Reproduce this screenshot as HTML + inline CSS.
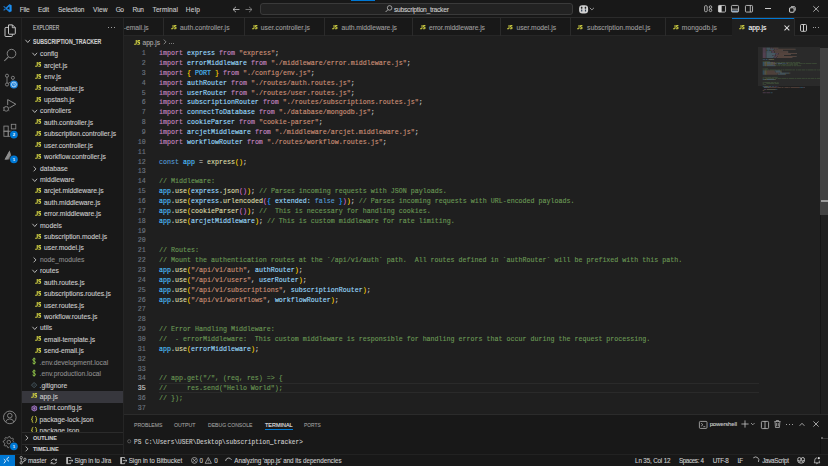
<!DOCTYPE html><html><head><meta charset="utf-8"><style>
*{margin:0;padding:0;box-sizing:border-box}
html,body{width:828px;height:466px;overflow:hidden;background:#1f1f1f}
body{position:relative;font-family:"Liberation Sans",sans-serif;color:#cccccc}
.a{position:absolute;white-space:pre}
.t{position:absolute;white-space:pre;line-height:10px;height:10px;-webkit-text-stroke:0.1px currentColor}
.mono{font-family:"Liberation Mono",monospace;-webkit-text-stroke:0.12px currentColor}
svg{position:absolute;overflow:visible}
</style></head><body><div class="a" style="left:0px;top:0px;width:828px;height:17px;background:#181818;"></div>
<div class="a" style="left:0px;top:17px;width:828px;height:1px;background:#2b2b2b;"></div>
<div class="a" style="left:0px;top:18px;width:22px;height:437px;background:#181818;"></div>
<div class="a" style="left:22px;top:18px;width:101px;height:437px;background:#181818;"></div>
<div class="a" style="left:123px;top:18px;width:705px;height:18px;background:#181818;"></div>
<div class="a" style="left:123px;top:35px;width:705px;height:1px;background:#262626;"></div>
<div class="a" style="left:123px;top:36px;width:705px;height:378px;background:#1f1f1f;"></div>
<div class="a" style="left:123px;top:415px;width:705px;height:40px;background:#181818;"></div>
<div class="a" style="left:123px;top:414.4px;width:705px;height:1px;background:#2b2b2b;"></div>
<div class="a" style="left:820.4px;top:47.5px;width:0.7px;height:366.5px;background:#151515;"></div>
<div class="a" style="left:0px;top:455px;width:828px;height:11px;background:#181818;"></div>
<div class="a" style="left:0px;top:454.2px;width:828px;height:0.9px;background:#222222;"></div>
<div class="a" style="left:0px;top:455px;width:15px;height:11px;background:#0078d4;"></div>
<div class="t" style="left:19.7px;top:4.70px;font-size:6.6px;color:#cccccc;line-height:10px;height:10px;;letter-spacing:-0.209px">File</div>
<div class="t" style="left:38.0px;top:4.70px;font-size:6.6px;color:#cccccc;line-height:10px;height:10px;;letter-spacing:-0.128px">Edit</div>
<div class="t" style="left:58.0px;top:4.70px;font-size:6.6px;color:#cccccc;line-height:10px;height:10px;;letter-spacing:-0.082px">Selection</div>
<div class="t" style="left:93.0px;top:4.70px;font-size:6.6px;color:#cccccc;line-height:10px;height:10px;;letter-spacing:0.103px">View</div>
<div class="t" style="left:115.75px;top:4.70px;font-size:6.6px;color:#cccccc;line-height:10px;height:10px;;letter-spacing:-0.561px">Go</div>
<div class="t" style="left:132.5px;top:4.70px;font-size:6.6px;color:#cccccc;line-height:10px;height:10px;;letter-spacing:-0.305px">Run</div>
<div class="t" style="left:152.5px;top:4.70px;font-size:6.6px;color:#cccccc;line-height:10px;height:10px;;letter-spacing:0.079px">Terminal</div>
<div class="t" style="left:185.75px;top:4.70px;font-size:6.6px;color:#cccccc;line-height:10px;height:10px;;letter-spacing:0.229px">Help</div>
<svg style="left:2.5px;top:4.3px;" width="10" height="9" viewBox="0 0 10 9"><g transform="scale(0.9,0.95)"><path d="M7.2 0.3 L9.6 1.4 V7.6 L7.2 8.7 L2.6 4.5 Z M7.2 2.6 L4.4 4.5 L7.2 6.4 Z" fill="#1c8ff0" fill-rule="evenodd"/><path d="M0.2 2.6 L1.2 2 L7.3 7.1 L7.2 8.7 Z M0.2 6.4 L1.2 7 L7.3 1.9 L7.2 0.3 Z" fill="#1a78d0"/></g></svg>
<svg style="left:231.5px;top:5.5px;" width="8" height="7" viewBox="0 0 8 7"><path d="M1 3.5 H7.5 M1 3.5 L4 0.8 M1 3.5 L4 6.2" stroke="#cccccc" stroke-width="0.8" fill="none"/></svg>
<svg style="left:244.5px;top:5.5px;" width="8" height="7" viewBox="0 0 8 7"><path d="M7 3.5 H0.5 M7 3.5 L4 0.8 M7 3.5 L4 6.2" stroke="#8a8a8a" stroke-width="0.8" fill="none"/></svg>
<div class="a" style="left:260px;top:3px;width:313px;height:12px;background:#222222;border:0.7px solid #3a3a3a;border-radius:3px"></div>
<div class="a" style="left:350.75px;top:0px;width:24.25px;height:1px;background:#0078d4;"></div>
<svg style="left:384.5px;top:5.3px;" width="8" height="8" viewBox="0 0 8 8"><circle cx="4.6" cy="2.9" r="2.3" stroke="#cccccc" stroke-width="0.7" fill="none"/><path d="M3 4.6 L0.6 7" stroke="#cccccc" stroke-width="0.8"/></svg>
<div class="t" style="left:394.0px;top:4.60px;font-size:6.7px;color:#cccccc;line-height:10px;height:10px;;letter-spacing:-0.261px">subscription_tracker</div>
<svg style="left:578.6px;top:4.6px;" width="16" height="9" viewBox="0 0 16 9"><rect x="0.1" y="0.2" width="9" height="8.2" rx="3.2" fill="#d0d0d0"/><rect x="1.9" y="1.7" width="1.5" height="2.0" rx="0.4" fill="#202020"/><rect x="5.7" y="1.7" width="1.5" height="2.0" rx="0.4" fill="#202020"/><rect x="2.1" y="4.4" width="1.2" height="2.2" rx="0.4" fill="#2a3b50"/><rect x="5.9" y="4.4" width="1.2" height="2.2" rx="0.4" fill="#2a3b50"/><path d="M10.8 2.8 L12.9 4.9 L15 2.8" stroke="#bdbdbd" stroke-width="0.75" fill="none"/></svg>
<svg style="left:704px;top:5px;" width="9" height="8" viewBox="0 0 9 8"><rect x="0.6" y="0.7" width="2.6" height="6" rx="0.9" stroke="#cccccc" stroke-width="0.8" fill="none"/><circle cx="6.5" cy="2.1" r="1.3" stroke="#cccccc" stroke-width="0.8" fill="none"/><circle cx="6.5" cy="5.3" r="1.3" stroke="#cccccc" stroke-width="0.8" fill="none"/></svg>
<svg style="left:717.8px;top:5px;" width="9" height="8" viewBox="0 0 9 8"><rect x="0.45" y="0.45" width="7.1" height="6.6" rx="1" stroke="#cccccc" stroke-width="0.85" fill="none"/><rect x="0.45" y="0.45" width="3.2" height="6.6" fill="#d8d8d8"/></svg>
<svg style="left:731.2px;top:5px;" width="9" height="8" viewBox="0 0 9 8"><rect x="0.45" y="0.45" width="7.1" height="6.6" rx="1" stroke="#cccccc" stroke-width="0.85" fill="none"/><rect x="0.45" y="3.7" width="7.1" height="0.8" fill="#cccccc"/><rect x="0.8" y="5.6" width="6.4" height="1.2" fill="#a9c4de"/></svg>
<svg style="left:744.6px;top:5px;" width="9" height="8" viewBox="0 0 9 8"><rect x="0.45" y="0.45" width="7.1" height="6.6" rx="1" stroke="#cccccc" stroke-width="0.85" fill="none"/><path d="M5.3 0.45 V7.05" stroke="#cccccc" stroke-width="0.85"/></svg>
<div class="a" style="left:765.3px;top:7.8px;width:5.8px;height:0.75px;background:#cccccc;"></div>
<svg style="left:788.6px;top:5.9px;" width="8" height="7" viewBox="0 0 8 7"><rect x="0.55" y="1.75" width="4.6" height="4.4" rx="1.1" stroke="#cccccc" stroke-width="1.05" fill="none"/><path d="M2.0 0.6 H5.0 Q6.3 0.6 6.3 1.9 V4.6" stroke="#cccccc" stroke-width="0.85" fill="none"/></svg>
<svg style="left:813px;top:6.1px;" width="7" height="6" viewBox="0 0 7 6"><path d="M0.3 0.2 L5.9 5.6 M5.9 0.2 L0.3 5.6" stroke="#cccccc" stroke-width="0.8"/></svg>
<svg style="left:0;top:0" width="22" height="466" viewBox="0 0 22 466"><path d="M8.5 24.9 H12.5 L15.3 27.7 V33.4 Q15.3 34.2 14.5 34.2 H9.3 Q8.5 34.2 8.5 33.4 Z" stroke="#d7d7d7" stroke-width="0.9" fill="none"/><path d="M8.5 27.4 H6 Q5 27.4 5 28.4 V35.9 Q5 36.5 5.7 36.5 H11.5 Q12.3 36.5 12.3 35.7 V34.2" stroke="#d7d7d7" stroke-width="0.9" fill="none"/><path d="M12.3 24.9 V27.7 H15.3" stroke="#d7d7d7" stroke-width="0.8" fill="none"/><circle cx="11.5" cy="53.6" r="4.3" stroke="#8b8b8b" stroke-width="0.95" fill="none"/><path d="M8.4 56.8 L4.3 61" stroke="#8b8b8b" stroke-width="1.05"/><circle cx="7" cy="75.7" r="1.55" stroke="#8b8b8b" stroke-width="0.85" fill="none"/><circle cx="7" cy="84.5" r="1.55" stroke="#8b8b8b" stroke-width="0.85" fill="none"/><circle cx="12.9" cy="77.8" r="1.55" stroke="#8b8b8b" stroke-width="0.85" fill="none"/><path d="M7 77.25 V82.95 M12.9 79.35 Q12.9 81.6 8.2 83.4" stroke="#8b8b8b" stroke-width="0.85" fill="none"/><circle cx="13.9" cy="84.5" r="4.5" fill="#181818"/><circle cx="13.9" cy="84.5" r="4.0" fill="#1b80d8"/><circle cx="13.9" cy="84.5" r="2.4" stroke="#fff" stroke-width="0.65" fill="none"/><path d="M13.9 83.2 V84.6 L14.9 85.2" stroke="#fff" stroke-width="0.55" fill="none"/><path d="M7.7 99.6 L15.8 104.2 L9.6 107.8" stroke="#8b8b8b" stroke-width="0.95" fill="none" stroke-linejoin="round"/><path d="M7.7 99.6 V105" stroke="#8b8b8b" stroke-width="0.95"/><circle cx="6.2" cy="108.9" r="2.3" fill="#181818" stroke="#8b8b8b" stroke-width="0.85"/><path d="M3 107.2 L4.1 107.8 M3 110.8 L4.1 110.2 M9.4 107.2 L8.3 107.8 M9.4 110.8 L8.3 110.2 M3.4 109 H4 M8.4 109 H9 M5 106.4 L5.6 107 M7.4 106.4 L6.8 107" stroke="#8b8b8b" stroke-width="0.65"/><rect x="3.9" y="126.1" width="4.3" height="5.1" stroke="#8b8b8b" stroke-width="0.85" fill="none"/><rect x="3.9" y="131.2" width="4.3" height="5.1" stroke="#8b8b8b" stroke-width="0.85" fill="none"/><rect x="8.2" y="131.2" width="3.5" height="5.1" stroke="#8b8b8b" stroke-width="0.85" fill="none"/><rect x="11.3" y="124.3" width="4.5" height="4.6" stroke="#8b8b8b" stroke-width="0.85" fill="none"/><circle cx="13.9" cy="134.6" r="4.5" fill="#181818"/><circle cx="13.9" cy="134.6" r="3.9" fill="#0078d4"/><text x="13.9" y="136.1" font-size="4.2" fill="#fff" text-anchor="middle" font-family="Liberation Sans" font-weight="bold">2</text><path d="M9.6 150.4 L12.6 159.4 H4.6 Z" fill="#747474"/><path d="M9.6 150.4 L10.6 155 L7.4 159.4 H4.6 Z" fill="#8e8e8e"/><circle cx="13.9" cy="159.3" r="4.5" fill="#181818"/><circle cx="13.9" cy="159.3" r="3.9" fill="#0078d4"/><text x="13.9" y="160.8" font-size="4.2" fill="#fff" text-anchor="middle" font-family="Liberation Sans" font-weight="bold">1</text><circle cx="9.8" cy="417.4" r="6.3" stroke="#8b8b8b" stroke-width="0.9" fill="none"/><circle cx="9.8" cy="415.6" r="2.3" stroke="#8b8b8b" stroke-width="0.9" fill="none"/><path d="M5.6 422 Q6.6 418.9 9.8 418.9 Q13 418.9 14 422" stroke="#8b8b8b" stroke-width="0.9" fill="none"/><polygon points="8.80,436.50 9.89,436.61 10.45,438.13 11.19,438.52 12.76,438.14 13.46,438.99 12.77,440.45 13.02,441.26 14.40,442.10 14.29,443.19 12.77,443.75 12.38,444.49 12.76,446.06 11.91,446.76 10.45,446.07 9.64,446.32 8.80,447.70 7.71,447.59 7.15,446.07 6.41,445.68 4.84,446.06 4.14,445.21 4.83,443.75 4.58,442.94 3.20,442.10 3.31,441.01 4.83,440.45 5.22,439.71 4.84,438.14 5.69,437.44 7.15,438.13 7.96,437.88" stroke="#8b8b8b" stroke-width="0.8" fill="none" stroke-linejoin="round"/><circle cx="8.8" cy="442.1" r="1.8" stroke="#8b8b8b" stroke-width="0.8" fill="none"/><circle cx="13.9" cy="446.3" r="4.5" fill="#181818"/><circle cx="13.9" cy="446.3" r="3.9" fill="#0078d4"/><text x="13.9" y="447.8" font-size="4.2" fill="#fff" text-anchor="middle" font-family="Liberation Sans" font-weight="bold">1</text></svg>
<div class="a" style="left:21px;top:17.5px;width:1px;height:437px;background:#232323;"></div>
<div class="t" style="left:32.6px;top:22.90px;font-size:6.3px;color:#cccccc;line-height:10px;height:10px;;transform:scaleX(0.7667);transform-origin:0.000px 50%">EXPLORER</div>
<div class="a" style="left:108.0px;top:26.9px;width:1.1px;height:1.1px;background:#cccccc;border-radius:50%"></div>
<div class="a" style="left:111.0px;top:26.9px;width:1.1px;height:1.1px;background:#cccccc;border-radius:50%"></div>
<div class="a" style="left:114.0px;top:26.9px;width:1.1px;height:1.1px;background:#cccccc;border-radius:50%"></div>
<div class="a" style="left:0;top:0;width:123px;height:432px;overflow:hidden">
<svg style="left:24.7px;top:39.410000000000004px;" width="6" height="5" viewBox="0 0 6 5"><path d="M0.4 0.8 L2.75 3.5 L5.1 0.8" stroke="#cccccc" stroke-width="0.85" fill="none"/></svg>
<div class="t" style="left:32.6px;top:37.01px;font-size:6.4px;color:#cccccc;line-height:10px;height:10px;;font-weight:bold;transform:scaleX(0.8221);transform-origin:0.000px 50%">SUBSCRIPTION_TRACKER</div>
<svg style="left:31.9px;top:52.13px;" width="6" height="5" viewBox="0 0 6 5"><path d="M0.4 0.8 L2.75 3.5 L5.1 0.8" stroke="#cccccc" stroke-width="0.85" fill="none"/></svg>
<div class="t" style="left:40px;top:49.33px;font-size:6.75px;color:#cccccc;line-height:10px;height:10px;">config</div>
<svg style="left:34.9px;top:62.25px;" width="7" height="5" viewBox="0 0 7 5"><g transform="scale(0.950,1.000)"><path d="M1.8 0 H3.0 V3.3 Q3.0 4.8 1.6 4.8 H0.1 V3.7 H1.3 Q1.8 3.7 1.8 3.2 Z" fill="#cbcb41"/><path d="M6.3 0.6 H4.7 Q3.9 0.6 3.9 1.45 Q3.9 2.35 4.8 2.35 H5.1 Q5.95 2.35 5.95 3.25 Q5.95 4.2 5.0 4.2 H3.5" stroke="#cbcb41" stroke-width="1.15" fill="none"/></g></svg>
<div class="t" style="left:44px;top:60.75px;font-size:6.75px;color:#cccccc;line-height:10px;height:10px;">arcjet.js</div>
<svg style="left:34.9px;top:73.67px;" width="7" height="5" viewBox="0 0 7 5"><g transform="scale(0.950,1.000)"><path d="M1.8 0 H3.0 V3.3 Q3.0 4.8 1.6 4.8 H0.1 V3.7 H1.3 Q1.8 3.7 1.8 3.2 Z" fill="#cbcb41"/><path d="M6.3 0.6 H4.7 Q3.9 0.6 3.9 1.45 Q3.9 2.35 4.8 2.35 H5.1 Q5.95 2.35 5.95 3.25 Q5.95 4.2 5.0 4.2 H3.5" stroke="#cbcb41" stroke-width="1.15" fill="none"/></g></svg>
<div class="t" style="left:44px;top:72.17px;font-size:6.75px;color:#cccccc;line-height:10px;height:10px;">env.js</div>
<svg style="left:34.9px;top:85.08999999999999px;" width="7" height="5" viewBox="0 0 7 5"><g transform="scale(0.950,1.000)"><path d="M1.8 0 H3.0 V3.3 Q3.0 4.8 1.6 4.8 H0.1 V3.7 H1.3 Q1.8 3.7 1.8 3.2 Z" fill="#cbcb41"/><path d="M6.3 0.6 H4.7 Q3.9 0.6 3.9 1.45 Q3.9 2.35 4.8 2.35 H5.1 Q5.95 2.35 5.95 3.25 Q5.95 4.2 5.0 4.2 H3.5" stroke="#cbcb41" stroke-width="1.15" fill="none"/></g></svg>
<div class="t" style="left:44px;top:83.59px;font-size:6.75px;color:#cccccc;line-height:10px;height:10px;">nodemailer.js</div>
<svg style="left:34.9px;top:96.51px;" width="7" height="5" viewBox="0 0 7 5"><g transform="scale(0.950,1.000)"><path d="M1.8 0 H3.0 V3.3 Q3.0 4.8 1.6 4.8 H0.1 V3.7 H1.3 Q1.8 3.7 1.8 3.2 Z" fill="#cbcb41"/><path d="M6.3 0.6 H4.7 Q3.9 0.6 3.9 1.45 Q3.9 2.35 4.8 2.35 H5.1 Q5.95 2.35 5.95 3.25 Q5.95 4.2 5.0 4.2 H3.5" stroke="#cbcb41" stroke-width="1.15" fill="none"/></g></svg>
<div class="t" style="left:44px;top:95.01px;font-size:6.75px;color:#cccccc;line-height:10px;height:10px;">upstash.js</div>
<svg style="left:31.9px;top:109.22999999999999px;" width="6" height="5" viewBox="0 0 6 5"><path d="M0.4 0.8 L2.75 3.5 L5.1 0.8" stroke="#cccccc" stroke-width="0.85" fill="none"/></svg>
<div class="t" style="left:40px;top:106.43px;font-size:6.75px;color:#cccccc;line-height:10px;height:10px;">controllers</div>
<svg style="left:34.9px;top:119.35px;" width="7" height="5" viewBox="0 0 7 5"><g transform="scale(0.950,1.000)"><path d="M1.8 0 H3.0 V3.3 Q3.0 4.8 1.6 4.8 H0.1 V3.7 H1.3 Q1.8 3.7 1.8 3.2 Z" fill="#cbcb41"/><path d="M6.3 0.6 H4.7 Q3.9 0.6 3.9 1.45 Q3.9 2.35 4.8 2.35 H5.1 Q5.95 2.35 5.95 3.25 Q5.95 4.2 5.0 4.2 H3.5" stroke="#cbcb41" stroke-width="1.15" fill="none"/></g></svg>
<div class="t" style="left:44px;top:117.85px;font-size:6.75px;color:#cccccc;line-height:10px;height:10px;">auth.controller.js</div>
<svg style="left:34.9px;top:130.77px;" width="7" height="5" viewBox="0 0 7 5"><g transform="scale(0.950,1.000)"><path d="M1.8 0 H3.0 V3.3 Q3.0 4.8 1.6 4.8 H0.1 V3.7 H1.3 Q1.8 3.7 1.8 3.2 Z" fill="#cbcb41"/><path d="M6.3 0.6 H4.7 Q3.9 0.6 3.9 1.45 Q3.9 2.35 4.8 2.35 H5.1 Q5.95 2.35 5.95 3.25 Q5.95 4.2 5.0 4.2 H3.5" stroke="#cbcb41" stroke-width="1.15" fill="none"/></g></svg>
<div class="t" style="left:44px;top:129.27px;font-size:6.75px;color:#cccccc;line-height:10px;height:10px;">subscription.controller.js</div>
<svg style="left:34.9px;top:142.19000000000003px;" width="7" height="5" viewBox="0 0 7 5"><g transform="scale(0.950,1.000)"><path d="M1.8 0 H3.0 V3.3 Q3.0 4.8 1.6 4.8 H0.1 V3.7 H1.3 Q1.8 3.7 1.8 3.2 Z" fill="#cbcb41"/><path d="M6.3 0.6 H4.7 Q3.9 0.6 3.9 1.45 Q3.9 2.35 4.8 2.35 H5.1 Q5.95 2.35 5.95 3.25 Q5.95 4.2 5.0 4.2 H3.5" stroke="#cbcb41" stroke-width="1.15" fill="none"/></g></svg>
<div class="t" style="left:44px;top:140.69px;font-size:6.75px;color:#cccccc;line-height:10px;height:10px;">user.controller.js</div>
<svg style="left:34.9px;top:153.61px;" width="7" height="5" viewBox="0 0 7 5"><g transform="scale(0.950,1.000)"><path d="M1.8 0 H3.0 V3.3 Q3.0 4.8 1.6 4.8 H0.1 V3.7 H1.3 Q1.8 3.7 1.8 3.2 Z" fill="#cbcb41"/><path d="M6.3 0.6 H4.7 Q3.9 0.6 3.9 1.45 Q3.9 2.35 4.8 2.35 H5.1 Q5.95 2.35 5.95 3.25 Q5.95 4.2 5.0 4.2 H3.5" stroke="#cbcb41" stroke-width="1.15" fill="none"/></g></svg>
<div class="t" style="left:44px;top:152.11px;font-size:6.75px;color:#cccccc;line-height:10px;height:10px;">workflow.controller.js</div>
<svg style="left:32.9px;top:165.53px;" width="5" height="6" viewBox="0 0 5 6"><path d="M0.6 0.5 L3.0 2.9 L0.6 5.3" stroke="#cccccc" stroke-width="0.85" fill="none"/></svg>
<div class="t" style="left:40px;top:163.53px;font-size:6.75px;color:#cccccc;line-height:10px;height:10px;">database</div>
<svg style="left:31.9px;top:177.75000000000003px;" width="6" height="5" viewBox="0 0 6 5"><path d="M0.4 0.8 L2.75 3.5 L5.1 0.8" stroke="#cccccc" stroke-width="0.85" fill="none"/></svg>
<div class="t" style="left:40px;top:174.95px;font-size:6.75px;color:#cccccc;line-height:10px;height:10px;">middleware</div>
<svg style="left:34.9px;top:187.87000000000003px;" width="7" height="5" viewBox="0 0 7 5"><g transform="scale(0.950,1.000)"><path d="M1.8 0 H3.0 V3.3 Q3.0 4.8 1.6 4.8 H0.1 V3.7 H1.3 Q1.8 3.7 1.8 3.2 Z" fill="#cbcb41"/><path d="M6.3 0.6 H4.7 Q3.9 0.6 3.9 1.45 Q3.9 2.35 4.8 2.35 H5.1 Q5.95 2.35 5.95 3.25 Q5.95 4.2 5.0 4.2 H3.5" stroke="#cbcb41" stroke-width="1.15" fill="none"/></g></svg>
<div class="t" style="left:44px;top:186.37px;font-size:6.75px;color:#cccccc;line-height:10px;height:10px;">arcjet.middleware.js</div>
<svg style="left:34.9px;top:199.29px;" width="7" height="5" viewBox="0 0 7 5"><g transform="scale(0.950,1.000)"><path d="M1.8 0 H3.0 V3.3 Q3.0 4.8 1.6 4.8 H0.1 V3.7 H1.3 Q1.8 3.7 1.8 3.2 Z" fill="#cbcb41"/><path d="M6.3 0.6 H4.7 Q3.9 0.6 3.9 1.45 Q3.9 2.35 4.8 2.35 H5.1 Q5.95 2.35 5.95 3.25 Q5.95 4.2 5.0 4.2 H3.5" stroke="#cbcb41" stroke-width="1.15" fill="none"/></g></svg>
<div class="t" style="left:44px;top:197.79px;font-size:6.75px;color:#cccccc;line-height:10px;height:10px;">auth.middleware.js</div>
<svg style="left:34.9px;top:210.71px;" width="7" height="5" viewBox="0 0 7 5"><g transform="scale(0.950,1.000)"><path d="M1.8 0 H3.0 V3.3 Q3.0 4.8 1.6 4.8 H0.1 V3.7 H1.3 Q1.8 3.7 1.8 3.2 Z" fill="#cbcb41"/><path d="M6.3 0.6 H4.7 Q3.9 0.6 3.9 1.45 Q3.9 2.35 4.8 2.35 H5.1 Q5.95 2.35 5.95 3.25 Q5.95 4.2 5.0 4.2 H3.5" stroke="#cbcb41" stroke-width="1.15" fill="none"/></g></svg>
<div class="t" style="left:44px;top:209.21px;font-size:6.75px;color:#cccccc;line-height:10px;height:10px;">error.middleware.js</div>
<svg style="left:31.9px;top:223.43000000000004px;" width="6" height="5" viewBox="0 0 6 5"><path d="M0.4 0.8 L2.75 3.5 L5.1 0.8" stroke="#cccccc" stroke-width="0.85" fill="none"/></svg>
<div class="t" style="left:40px;top:220.63px;font-size:6.75px;color:#cccccc;line-height:10px;height:10px;">models</div>
<svg style="left:34.9px;top:233.54999999999998px;" width="7" height="5" viewBox="0 0 7 5"><g transform="scale(0.950,1.000)"><path d="M1.8 0 H3.0 V3.3 Q3.0 4.8 1.6 4.8 H0.1 V3.7 H1.3 Q1.8 3.7 1.8 3.2 Z" fill="#cbcb41"/><path d="M6.3 0.6 H4.7 Q3.9 0.6 3.9 1.45 Q3.9 2.35 4.8 2.35 H5.1 Q5.95 2.35 5.95 3.25 Q5.95 4.2 5.0 4.2 H3.5" stroke="#cbcb41" stroke-width="1.15" fill="none"/></g></svg>
<div class="t" style="left:44px;top:232.05px;font-size:6.75px;color:#cccccc;line-height:10px;height:10px;">subscription.model.js</div>
<svg style="left:34.9px;top:244.97px;" width="7" height="5" viewBox="0 0 7 5"><g transform="scale(0.950,1.000)"><path d="M1.8 0 H3.0 V3.3 Q3.0 4.8 1.6 4.8 H0.1 V3.7 H1.3 Q1.8 3.7 1.8 3.2 Z" fill="#cbcb41"/><path d="M6.3 0.6 H4.7 Q3.9 0.6 3.9 1.45 Q3.9 2.35 4.8 2.35 H5.1 Q5.95 2.35 5.95 3.25 Q5.95 4.2 5.0 4.2 H3.5" stroke="#cbcb41" stroke-width="1.15" fill="none"/></g></svg>
<div class="t" style="left:44px;top:243.47px;font-size:6.75px;color:#cccccc;line-height:10px;height:10px;">user.model.js</div>
<svg style="left:32.9px;top:256.89px;" width="5" height="6" viewBox="0 0 5 6"><path d="M0.6 0.5 L3.0 2.9 L0.6 5.3" stroke="#cccccc" stroke-width="0.85" fill="none"/></svg>
<div class="t" style="left:40px;top:254.89px;font-size:6.75px;color:#8c8c8c;line-height:10px;height:10px;">node_modules</div>
<svg style="left:31.9px;top:269.11px;" width="6" height="5" viewBox="0 0 6 5"><path d="M0.4 0.8 L2.75 3.5 L5.1 0.8" stroke="#cccccc" stroke-width="0.85" fill="none"/></svg>
<div class="t" style="left:40px;top:266.31px;font-size:6.75px;color:#cccccc;line-height:10px;height:10px;">routes</div>
<svg style="left:34.9px;top:279.22999999999996px;" width="7" height="5" viewBox="0 0 7 5"><g transform="scale(0.950,1.000)"><path d="M1.8 0 H3.0 V3.3 Q3.0 4.8 1.6 4.8 H0.1 V3.7 H1.3 Q1.8 3.7 1.8 3.2 Z" fill="#cbcb41"/><path d="M6.3 0.6 H4.7 Q3.9 0.6 3.9 1.45 Q3.9 2.35 4.8 2.35 H5.1 Q5.95 2.35 5.95 3.25 Q5.95 4.2 5.0 4.2 H3.5" stroke="#cbcb41" stroke-width="1.15" fill="none"/></g></svg>
<div class="t" style="left:44px;top:277.73px;font-size:6.75px;color:#cccccc;line-height:10px;height:10px;">auth.routes.js</div>
<svg style="left:34.9px;top:290.65px;" width="7" height="5" viewBox="0 0 7 5"><g transform="scale(0.950,1.000)"><path d="M1.8 0 H3.0 V3.3 Q3.0 4.8 1.6 4.8 H0.1 V3.7 H1.3 Q1.8 3.7 1.8 3.2 Z" fill="#cbcb41"/><path d="M6.3 0.6 H4.7 Q3.9 0.6 3.9 1.45 Q3.9 2.35 4.8 2.35 H5.1 Q5.95 2.35 5.95 3.25 Q5.95 4.2 5.0 4.2 H3.5" stroke="#cbcb41" stroke-width="1.15" fill="none"/></g></svg>
<div class="t" style="left:44px;top:289.15px;font-size:6.75px;color:#cccccc;line-height:10px;height:10px;">subscriptions.routes.js</div>
<svg style="left:34.9px;top:302.07px;" width="7" height="5" viewBox="0 0 7 5"><g transform="scale(0.950,1.000)"><path d="M1.8 0 H3.0 V3.3 Q3.0 4.8 1.6 4.8 H0.1 V3.7 H1.3 Q1.8 3.7 1.8 3.2 Z" fill="#cbcb41"/><path d="M6.3 0.6 H4.7 Q3.9 0.6 3.9 1.45 Q3.9 2.35 4.8 2.35 H5.1 Q5.95 2.35 5.95 3.25 Q5.95 4.2 5.0 4.2 H3.5" stroke="#cbcb41" stroke-width="1.15" fill="none"/></g></svg>
<div class="t" style="left:44px;top:300.57px;font-size:6.75px;color:#cccccc;line-height:10px;height:10px;">user.routes.js</div>
<svg style="left:34.9px;top:313.48999999999995px;" width="7" height="5" viewBox="0 0 7 5"><g transform="scale(0.950,1.000)"><path d="M1.8 0 H3.0 V3.3 Q3.0 4.8 1.6 4.8 H0.1 V3.7 H1.3 Q1.8 3.7 1.8 3.2 Z" fill="#cbcb41"/><path d="M6.3 0.6 H4.7 Q3.9 0.6 3.9 1.45 Q3.9 2.35 4.8 2.35 H5.1 Q5.95 2.35 5.95 3.25 Q5.95 4.2 5.0 4.2 H3.5" stroke="#cbcb41" stroke-width="1.15" fill="none"/></g></svg>
<div class="t" style="left:44px;top:311.99px;font-size:6.75px;color:#cccccc;line-height:10px;height:10px;">workflow.routes.js</div>
<svg style="left:31.9px;top:326.21px;" width="6" height="5" viewBox="0 0 6 5"><path d="M0.4 0.8 L2.75 3.5 L5.1 0.8" stroke="#cccccc" stroke-width="0.85" fill="none"/></svg>
<div class="t" style="left:40px;top:323.41px;font-size:6.75px;color:#cccccc;line-height:10px;height:10px;">utils</div>
<svg style="left:34.9px;top:336.33px;" width="7" height="5" viewBox="0 0 7 5"><g transform="scale(0.950,1.000)"><path d="M1.8 0 H3.0 V3.3 Q3.0 4.8 1.6 4.8 H0.1 V3.7 H1.3 Q1.8 3.7 1.8 3.2 Z" fill="#cbcb41"/><path d="M6.3 0.6 H4.7 Q3.9 0.6 3.9 1.45 Q3.9 2.35 4.8 2.35 H5.1 Q5.95 2.35 5.95 3.25 Q5.95 4.2 5.0 4.2 H3.5" stroke="#cbcb41" stroke-width="1.15" fill="none"/></g></svg>
<div class="t" style="left:44px;top:334.83px;font-size:6.75px;color:#cccccc;line-height:10px;height:10px;">email-template.js</div>
<svg style="left:34.9px;top:347.74999999999994px;" width="7" height="5" viewBox="0 0 7 5"><g transform="scale(0.950,1.000)"><path d="M1.8 0 H3.0 V3.3 Q3.0 4.8 1.6 4.8 H0.1 V3.7 H1.3 Q1.8 3.7 1.8 3.2 Z" fill="#cbcb41"/><path d="M6.3 0.6 H4.7 Q3.9 0.6 3.9 1.45 Q3.9 2.35 4.8 2.35 H5.1 Q5.95 2.35 5.95 3.25 Q5.95 4.2 5.0 4.2 H3.5" stroke="#cbcb41" stroke-width="1.15" fill="none"/></g></svg>
<div class="t" style="left:44px;top:346.25px;font-size:6.75px;color:#cccccc;line-height:10px;height:10px;">send-email.js</div>
<svg style="left:31.6px;top:357.46999999999997px;" width="5" height="8" viewBox="0 0 5 8"><path d="M3.6 2.2 Q3.2 1.6 2.1 1.6 Q0.8 1.6 0.8 2.8 Q0.8 3.8 2.1 4.1 Q3.5 4.4 3.5 5.4 Q3.5 6.6 2.1 6.6 Q1 6.6 0.5 5.9 M2.1 0.6 V7.6" stroke="#8dc149" stroke-width="0.95" fill="none"/></svg>
<div class="t" style="left:39.6px;top:357.67px;font-size:6.75px;color:#8c8c8c;line-height:10px;height:10px;">.env.development.local</div>
<svg style="left:31.6px;top:368.89px;" width="5" height="8" viewBox="0 0 5 8"><path d="M3.6 2.2 Q3.2 1.6 2.1 1.6 Q0.8 1.6 0.8 2.8 Q0.8 3.8 2.1 4.1 Q3.5 4.4 3.5 5.4 Q3.5 6.6 2.1 6.6 Q1 6.6 0.5 5.9 M2.1 0.6 V7.6" stroke="#8dc149" stroke-width="0.95" fill="none"/></svg>
<div class="t" style="left:39.6px;top:369.09px;font-size:6.75px;color:#8c8c8c;line-height:10px;height:10px;">.env.production.local</div>
<svg style="left:30.6px;top:382.31px;" width="7" height="7" viewBox="0 0 7 7"><path d="M3.1 0.5 L5.7 3.1 L3.1 5.7 L0.5 3.1 Z" stroke="#4b5d68" stroke-width="0.9" fill="none"/><path d="M3.1 2.2 L4 3.1 L3.1 4 L2.2 3.1 Z" fill="#3a4850"/></svg>
<div class="t" style="left:39.6px;top:380.51px;font-size:6.75px;color:#cccccc;line-height:10px;height:10px;">.gitignore</div>
<div class="a" style="left:22px;top:391.21999999999997px;width:100.5px;height:11.42px;background:#37373d;"></div>
<svg style="left:30.9px;top:393.42999999999995px;" width="7" height="5" viewBox="0 0 7 5"><g transform="scale(0.950,1.000)"><path d="M1.8 0 H3.0 V3.3 Q3.0 4.8 1.6 4.8 H0.1 V3.7 H1.3 Q1.8 3.7 1.8 3.2 Z" fill="#cbcb41"/><path d="M6.3 0.6 H4.7 Q3.9 0.6 3.9 1.45 Q3.9 2.35 4.8 2.35 H5.1 Q5.95 2.35 5.95 3.25 Q5.95 4.2 5.0 4.2 H3.5" stroke="#cbcb41" stroke-width="1.15" fill="none"/></g></svg>
<div class="t" style="left:39.8px;top:391.93px;font-size:6.75px;color:#cccccc;line-height:10px;height:10px;">app.js</div>
<svg style="left:30.7px;top:405.04999999999995px;" width="7" height="7" viewBox="0 0 7 7"><polygon points="3.3,0.2 6.1,1.8 6.1,4.9 3.3,6.5 0.5,4.9 0.5,1.8" fill="#a074c4" /><polygon points="3.3,1.7 4.8,2.5 4.8,4.2 3.3,5 1.8,4.2 1.8,2.5" fill="none" stroke="#181818" stroke-width="0.6"/></svg>
<div class="t" style="left:39.6px;top:403.35px;font-size:6.75px;color:#cccccc;line-height:10px;height:10px;">eslint.config.js</div>
<svg style="left:30.6px;top:415.57px;" width="7" height="8" viewBox="0 0 7 8"><path d="M2.3 0.4 Q1.2 0.4 1.2 1.6 V2.6 Q1.2 3.3 0.4 3.3 Q1.2 3.3 1.2 4.0 V5.3 Q1.2 6.5 2.3 6.5 M4.2 0.4 Q5.3 0.4 5.3 1.6 V2.6 Q5.3 3.3 6.1 3.3 Q5.3 3.3 5.3 4.0 V5.3 Q5.3 6.5 4.2 6.5" stroke="#cbcb41" stroke-width="0.95" fill="none"/></svg>
<div class="t" style="left:39.6px;top:414.77px;font-size:6.75px;color:#cccccc;line-height:10px;height:10px;">package-lock.json</div>
<svg style="left:30.6px;top:426.98999999999995px;" width="7" height="8" viewBox="0 0 7 8"><path d="M2.3 0.4 Q1.2 0.4 1.2 1.6 V2.6 Q1.2 3.3 0.4 3.3 Q1.2 3.3 1.2 4.0 V5.3 Q1.2 6.5 2.3 6.5 M4.2 0.4 Q5.3 0.4 5.3 1.6 V2.6 Q5.3 3.3 6.1 3.3 Q5.3 3.3 5.3 4.0 V5.3 Q5.3 6.5 4.2 6.5" stroke="#cbcb41" stroke-width="0.95" fill="none"/></svg>
<div class="t" style="left:39.6px;top:426.19px;font-size:6.75px;color:#cccccc;line-height:10px;height:10px;">package.json</div>
</div>
<div class="a" style="left:22px;top:432px;width:100.5px;height:0.7px;background:#2b2b2b;"></div>
<div class="a" style="left:22px;top:443.5px;width:100.5px;height:0.7px;background:#2b2b2b;"></div>
<svg style="left:25px;top:434.8px;" width="5" height="6" viewBox="0 0 5 6"><path d="M0.6 0.5 L3.0 2.9 L0.6 5.3" stroke="#cccccc" stroke-width="0.85" fill="none"/></svg>
<div class="t" style="left:32.8px;top:432.80px;font-size:5.5px;color:#cccccc;line-height:10px;height:10px;;font-weight:bold;transform:scaleX(0.9857);transform-origin:0.000px 50%">OUTLINE</div>
<svg style="left:25px;top:446.4px;" width="5" height="6" viewBox="0 0 5 6"><path d="M0.6 0.5 L3.0 2.9 L0.6 5.3" stroke="#cccccc" stroke-width="0.85" fill="none"/></svg>
<div class="t" style="left:32.8px;top:444.40px;font-size:5.5px;color:#cccccc;line-height:10px;height:10px;;font-weight:bold;transform:scaleX(1.0017);transform-origin:0.000px 50%">TIMELINE</div>
<div class="a" style="left:163.25px;top:18px;width:0.8px;height:17.5px;background:#2b2b2b;"></div>
<div class="t" style="left:123.75px;top:23.00px;font-size:6.75px;color:#9d9d9d;line-height:10px;height:10px;;letter-spacing:-0.018px">-email.js</div>
<div class="a" style="left:244.0px;top:18px;width:0.8px;height:17.5px;background:#2b2b2b;"></div>
<svg style="left:171.15px;top:24.8px;" width="7" height="5" viewBox="0 0 7 5"><g transform="scale(0.855,0.900)"><path d="M1.8 0 H3.0 V3.3 Q3.0 4.8 1.6 4.8 H0.1 V3.7 H1.3 Q1.8 3.7 1.8 3.2 Z" fill="#cbcb41"/><path d="M6.3 0.6 H4.7 Q3.9 0.6 3.9 1.45 Q3.9 2.35 4.8 2.35 H5.1 Q5.95 2.35 5.95 3.25 Q5.95 4.2 5.0 4.2 H3.5" stroke="#cbcb41" stroke-width="1.15" fill="none"/></g></svg>
<div class="t" style="left:180.0px;top:23.00px;font-size:6.75px;color:#9d9d9d;line-height:10px;height:10px;;letter-spacing:0.021px">auth.controller.js</div>
<div class="a" style="left:323.7px;top:18px;width:0.8px;height:17.5px;background:#2b2b2b;"></div>
<svg style="left:251.9px;top:24.8px;" width="7" height="5" viewBox="0 0 7 5"><g transform="scale(0.855,0.900)"><path d="M1.8 0 H3.0 V3.3 Q3.0 4.8 1.6 4.8 H0.1 V3.7 H1.3 Q1.8 3.7 1.8 3.2 Z" fill="#cbcb41"/><path d="M6.3 0.6 H4.7 Q3.9 0.6 3.9 1.45 Q3.9 2.35 4.8 2.35 H5.1 Q5.95 2.35 5.95 3.25 Q5.95 4.2 5.0 4.2 H3.5" stroke="#cbcb41" stroke-width="1.15" fill="none"/></g></svg>
<div class="t" style="left:260.75px;top:23.00px;font-size:6.75px;color:#9d9d9d;line-height:10px;height:10px;;letter-spacing:0.028px">user.controller.js</div>
<div class="a" style="left:411.8px;top:18px;width:0.8px;height:17.5px;background:#2b2b2b;"></div>
<svg style="left:331.59999999999997px;top:24.8px;" width="7" height="5" viewBox="0 0 7 5"><g transform="scale(0.855,0.900)"><path d="M1.8 0 H3.0 V3.3 Q3.0 4.8 1.6 4.8 H0.1 V3.7 H1.3 Q1.8 3.7 1.8 3.2 Z" fill="#cbcb41"/><path d="M6.3 0.6 H4.7 Q3.9 0.6 3.9 1.45 Q3.9 2.35 4.8 2.35 H5.1 Q5.95 2.35 5.95 3.25 Q5.95 4.2 5.0 4.2 H3.5" stroke="#cbcb41" stroke-width="1.15" fill="none"/></g></svg>
<div class="t" style="left:341.5px;top:23.00px;font-size:6.75px;color:#9d9d9d;line-height:10px;height:10px;;letter-spacing:-0.047px">auth.middleware.js</div>
<div class="a" style="left:499.5px;top:18px;width:0.8px;height:17.5px;background:#2b2b2b;"></div>
<svg style="left:419.7px;top:24.8px;" width="7" height="5" viewBox="0 0 7 5"><g transform="scale(0.855,0.900)"><path d="M1.8 0 H3.0 V3.3 Q3.0 4.8 1.6 4.8 H0.1 V3.7 H1.3 Q1.8 3.7 1.8 3.2 Z" fill="#cbcb41"/><path d="M6.3 0.6 H4.7 Q3.9 0.6 3.9 1.45 Q3.9 2.35 4.8 2.35 H5.1 Q5.95 2.35 5.95 3.25 Q5.95 4.2 5.0 4.2 H3.5" stroke="#cbcb41" stroke-width="1.15" fill="none"/></g></svg>
<div class="t" style="left:429.0px;top:23.00px;font-size:6.75px;color:#9d9d9d;line-height:10px;height:10px;;letter-spacing:-0.058px">error.middleware.js</div>
<div class="a" style="left:569.5px;top:18px;width:0.8px;height:17.5px;background:#2b2b2b;"></div>
<svg style="left:507.4px;top:24.8px;" width="7" height="5" viewBox="0 0 7 5"><g transform="scale(0.855,0.900)"><path d="M1.8 0 H3.0 V3.3 Q3.0 4.8 1.6 4.8 H0.1 V3.7 H1.3 Q1.8 3.7 1.8 3.2 Z" fill="#cbcb41"/><path d="M6.3 0.6 H4.7 Q3.9 0.6 3.9 1.45 Q3.9 2.35 4.8 2.35 H5.1 Q5.95 2.35 5.95 3.25 Q5.95 4.2 5.0 4.2 H3.5" stroke="#cbcb41" stroke-width="1.15" fill="none"/></g></svg>
<div class="t" style="left:516.5px;top:23.00px;font-size:6.75px;color:#9d9d9d;line-height:10px;height:10px;;letter-spacing:-0.021px">user.model.js</div>
<div class="a" style="left:664.7px;top:18px;width:0.8px;height:17.5px;background:#2b2b2b;"></div>
<svg style="left:577.4px;top:24.8px;" width="7" height="5" viewBox="0 0 7 5"><g transform="scale(0.855,0.900)"><path d="M1.8 0 H3.0 V3.3 Q3.0 4.8 1.6 4.8 H0.1 V3.7 H1.3 Q1.8 3.7 1.8 3.2 Z" fill="#cbcb41"/><path d="M6.3 0.6 H4.7 Q3.9 0.6 3.9 1.45 Q3.9 2.35 4.8 2.35 H5.1 Q5.95 2.35 5.95 3.25 Q5.95 4.2 5.0 4.2 H3.5" stroke="#cbcb41" stroke-width="1.15" fill="none"/></g></svg>
<div class="t" style="left:587.0px;top:23.00px;font-size:6.75px;color:#9d9d9d;line-height:10px;height:10px;;letter-spacing:0.023px">subscription.model.js</div>
<div class="a" style="left:731.5px;top:18px;width:0.8px;height:17.5px;background:#2b2b2b;"></div>
<svg style="left:672.6px;top:24.8px;" width="7" height="5" viewBox="0 0 7 5"><g transform="scale(0.855,0.900)"><path d="M1.8 0 H3.0 V3.3 Q3.0 4.8 1.6 4.8 H0.1 V3.7 H1.3 Q1.8 3.7 1.8 3.2 Z" fill="#cbcb41"/><path d="M6.3 0.6 H4.7 Q3.9 0.6 3.9 1.45 Q3.9 2.35 4.8 2.35 H5.1 Q5.95 2.35 5.95 3.25 Q5.95 4.2 5.0 4.2 H3.5" stroke="#cbcb41" stroke-width="1.15" fill="none"/></g></svg>
<div class="t" style="left:681.75px;top:23.00px;font-size:6.75px;color:#9d9d9d;line-height:10px;height:10px;;letter-spacing:0.039px">mongodb.js</div>
<div class="a" style="left:732px;top:17.5px;width:62.5px;height:18.5px;background:#1f1f1f;"></div>
<div class="a" style="left:732px;top:17.5px;width:62.5px;height:1.2px;background:#0078d4;"></div>
<div class="a" style="left:794.0px;top:18px;width:0.8px;height:17.5px;background:#2b2b2b;"></div>
<svg style="left:739.4px;top:24.8px;" width="7" height="5" viewBox="0 0 7 5"><g transform="scale(0.855,0.900)"><path d="M1.8 0 H3.0 V3.3 Q3.0 4.8 1.6 4.8 H0.1 V3.7 H1.3 Q1.8 3.7 1.8 3.2 Z" fill="#cbcb41"/><path d="M6.3 0.6 H4.7 Q3.9 0.6 3.9 1.45 Q3.9 2.35 4.8 2.35 H5.1 Q5.95 2.35 5.95 3.25 Q5.95 4.2 5.0 4.2 H3.5" stroke="#cbcb41" stroke-width="1.15" fill="none"/></g></svg>
<div class="t" style="left:748.5px;top:23.00px;font-size:6.75px;color:#ffffff;line-height:10px;height:10px;;letter-spacing:-0.005px">app.js</div>
<svg style="left:784px;top:25px;" width="6" height="6" viewBox="0 0 6 6"><path d="M0.5 0.5 L5.3 5.3 M5.3 0.5 L0.5 5.3" stroke="#e0e0e0" stroke-width="1.05"/></svg>
<svg style="left:799.5px;top:23.6px;" width="7" height="8" viewBox="0 0 7 8"><rect x="0.5" y="0.5" width="6" height="6.8" rx="1" stroke="#cccccc" stroke-width="0.95" fill="none"/><path d="M3.5 0.5 V7.3" stroke="#cccccc" stroke-width="1"/></svg>
<div class="a" style="left:812.5px;top:26.8px;width:1.1px;height:1.1px;background:#cccccc;border-radius:50%"></div>
<div class="a" style="left:815.3px;top:26.8px;width:1.1px;height:1.1px;background:#cccccc;border-radius:50%"></div>
<div class="a" style="left:818.1px;top:26.8px;width:1.1px;height:1.1px;background:#cccccc;border-radius:50%"></div>
<div class="a" style="left:123.2px;top:17.5px;width:1px;height:437px;background:#252525;"></div>
<svg style="left:134.3px;top:39.7px;" width="7" height="5" viewBox="0 0 7 5"><g transform="scale(0.950,1.000)"><path d="M1.8 0 H3.0 V3.3 Q3.0 4.8 1.6 4.8 H0.1 V3.7 H1.3 Q1.8 3.7 1.8 3.2 Z" fill="#cbcb41"/><path d="M6.3 0.6 H4.7 Q3.9 0.6 3.9 1.45 Q3.9 2.35 4.8 2.35 H5.1 Q5.95 2.35 5.95 3.25 Q5.95 4.2 5.0 4.2 H3.5" stroke="#cbcb41" stroke-width="1.15" fill="none"/></g></svg>
<div class="t" style="left:142.6px;top:37.80px;font-size:6.6px;color:#a9a9a9;line-height:10px;height:10px;;letter-spacing:-0.044px">app.js</div>
<svg style="left:162.8px;top:38.9px;" width="4" height="6" viewBox="0 0 4 6"><path d="M0.8 0.6 L3 2.9 L0.8 5.2" stroke="#a9a9a9" stroke-width="0.7" fill="none"/></svg>
<div class="a" style="left:169.0px;top:43.4px;width:1.0px;height:1.0px;background:#9a9a9a;border-radius:50%"></div>
<div class="a" style="left:170.9px;top:43.4px;width:1.0px;height:1.0px;background:#9a9a9a;border-radius:50%"></div>
<div class="a" style="left:172.8px;top:43.4px;width:1.0px;height:1.0px;background:#9a9a9a;border-radius:50%"></div>
<div class="a" style="left:158.7px;top:382.97200000000004px;width:600px;height:10.2px;background:transparent;border-top:0.9px solid #2a2a2a;border-bottom:0.9px solid #2a2a2a"></div>
<div class="a mono" style="left:126px;width:19.8px;text-align:right;top:49.10px;height:9.858px;line-height:9.858px;font-size:6.667px;color:#6e7681">1</div>
<div class="a mono" style="left:159.0px;top:49.10px;height:9.858px;line-height:9.858px;font-size:6.667px"><span style="color:#c586c0">import</span><span style="color:#cccccc"> </span><span style="color:#9cdcfe">express</span><span style="color:#cccccc"> </span><span style="color:#c586c0">from</span><span style="color:#cccccc"> </span><span style="color:#ce9178">&quot;express&quot;</span><span style="color:#cccccc">;</span></div>
<div class="a mono" style="left:126px;width:19.8px;text-align:right;top:58.96px;height:9.858px;line-height:9.858px;font-size:6.667px;color:#6e7681">2</div>
<div class="a mono" style="left:159.0px;top:58.96px;height:9.858px;line-height:9.858px;font-size:6.667px"><span style="color:#c586c0">import</span><span style="color:#cccccc"> </span><span style="color:#9cdcfe">errorMiddleware</span><span style="color:#cccccc"> </span><span style="color:#c586c0">from</span><span style="color:#cccccc"> </span><span style="color:#ce9178">&quot;./middleware/error.middleware.js&quot;</span><span style="color:#cccccc">;</span></div>
<div class="a mono" style="left:126px;width:19.8px;text-align:right;top:68.82px;height:9.858px;line-height:9.858px;font-size:6.667px;color:#6e7681">3</div>
<div class="a mono" style="left:159.0px;top:68.82px;height:9.858px;line-height:9.858px;font-size:6.667px"><span style="color:#c586c0">import</span><span style="color:#cccccc"> </span><span style="color:#ffd700">{</span><span style="color:#cccccc"> </span><span style="color:#4fc1ff">PORT</span><span style="color:#cccccc"> </span><span style="color:#ffd700">}</span><span style="color:#cccccc"> </span><span style="color:#c586c0">from</span><span style="color:#cccccc"> </span><span style="color:#ce9178">&quot;./config/env.js&quot;</span><span style="color:#cccccc">;</span></div>
<div class="a mono" style="left:126px;width:19.8px;text-align:right;top:78.67px;height:9.858px;line-height:9.858px;font-size:6.667px;color:#6e7681">4</div>
<div class="a mono" style="left:159.0px;top:78.67px;height:9.858px;line-height:9.858px;font-size:6.667px"><span style="color:#c586c0">import</span><span style="color:#cccccc"> </span><span style="color:#9cdcfe">authRouter</span><span style="color:#cccccc"> </span><span style="color:#c586c0">from</span><span style="color:#cccccc"> </span><span style="color:#ce9178">&quot;./routes/auth.routes.js&quot;</span><span style="color:#cccccc">;</span></div>
<div class="a mono" style="left:126px;width:19.8px;text-align:right;top:88.53px;height:9.858px;line-height:9.858px;font-size:6.667px;color:#6e7681">5</div>
<div class="a mono" style="left:159.0px;top:88.53px;height:9.858px;line-height:9.858px;font-size:6.667px"><span style="color:#c586c0">import</span><span style="color:#cccccc"> </span><span style="color:#9cdcfe">userRouter</span><span style="color:#cccccc"> </span><span style="color:#c586c0">from</span><span style="color:#cccccc"> </span><span style="color:#ce9178">&quot;./routes/user.routes.js&quot;</span><span style="color:#cccccc">;</span></div>
<div class="a mono" style="left:126px;width:19.8px;text-align:right;top:98.39px;height:9.858px;line-height:9.858px;font-size:6.667px;color:#6e7681">6</div>
<div class="a mono" style="left:159.0px;top:98.39px;height:9.858px;line-height:9.858px;font-size:6.667px"><span style="color:#c586c0">import</span><span style="color:#cccccc"> </span><span style="color:#9cdcfe">subscriptionRouter</span><span style="color:#cccccc"> </span><span style="color:#c586c0">from</span><span style="color:#cccccc"> </span><span style="color:#ce9178">&quot;./routes/subscriptions.routes.js&quot;</span><span style="color:#cccccc">;</span></div>
<div class="a mono" style="left:126px;width:19.8px;text-align:right;top:108.25px;height:9.858px;line-height:9.858px;font-size:6.667px;color:#6e7681">7</div>
<div class="a mono" style="left:159.0px;top:108.25px;height:9.858px;line-height:9.858px;font-size:6.667px"><span style="color:#c586c0">import</span><span style="color:#cccccc"> </span><span style="color:#9cdcfe">connectToDatabase</span><span style="color:#cccccc"> </span><span style="color:#c586c0">from</span><span style="color:#cccccc"> </span><span style="color:#ce9178">&quot;./database/mongodb.js&quot;</span><span style="color:#cccccc">;</span></div>
<div class="a mono" style="left:126px;width:19.8px;text-align:right;top:118.11px;height:9.858px;line-height:9.858px;font-size:6.667px;color:#6e7681">8</div>
<div class="a mono" style="left:159.0px;top:118.11px;height:9.858px;line-height:9.858px;font-size:6.667px"><span style="color:#c586c0">import</span><span style="color:#cccccc"> </span><span style="color:#9cdcfe">cookieParser</span><span style="color:#cccccc"> </span><span style="color:#c586c0">from</span><span style="color:#cccccc"> </span><span style="color:#ce9178">&quot;cookie-parser&quot;</span><span style="color:#cccccc">;</span></div>
<div class="a mono" style="left:126px;width:19.8px;text-align:right;top:127.96px;height:9.858px;line-height:9.858px;font-size:6.667px;color:#6e7681">9</div>
<div class="a mono" style="left:159.0px;top:127.96px;height:9.858px;line-height:9.858px;font-size:6.667px"><span style="color:#c586c0">import</span><span style="color:#cccccc"> </span><span style="color:#9cdcfe">arcjetMiddleware</span><span style="color:#cccccc"> </span><span style="color:#c586c0">from</span><span style="color:#cccccc"> </span><span style="color:#ce9178">&quot;./middleware/arcjet.middleware.js&quot;</span><span style="color:#cccccc">;</span></div>
<div class="a mono" style="left:126px;width:19.8px;text-align:right;top:137.82px;height:9.858px;line-height:9.858px;font-size:6.667px;color:#6e7681">10</div>
<div class="a mono" style="left:159.0px;top:137.82px;height:9.858px;line-height:9.858px;font-size:6.667px"><span style="color:#c586c0">import</span><span style="color:#cccccc"> </span><span style="color:#9cdcfe">workflowRouter</span><span style="color:#cccccc"> </span><span style="color:#c586c0">from</span><span style="color:#cccccc"> </span><span style="color:#ce9178">&quot;./routes/workflow.routes.js&quot;</span><span style="color:#cccccc">;</span></div>
<div class="a mono" style="left:126px;width:19.8px;text-align:right;top:147.68px;height:9.858px;line-height:9.858px;font-size:6.667px;color:#6e7681">11</div>
<div class="a mono" style="left:126px;width:19.8px;text-align:right;top:157.54px;height:9.858px;line-height:9.858px;font-size:6.667px;color:#6e7681">12</div>
<div class="a mono" style="left:159.0px;top:157.54px;height:9.858px;line-height:9.858px;font-size:6.667px"><span style="color:#569cd6">const</span><span style="color:#cccccc"> </span><span style="color:#4fc1ff">app</span><span style="color:#cccccc"> </span><span style="color:#d4d4d4">=</span><span style="color:#cccccc"> </span><span style="color:#dcdcaa">express</span><span style="color:#ffd700">()</span><span style="color:#cccccc">;</span></div>
<div class="a mono" style="left:126px;width:19.8px;text-align:right;top:167.40px;height:9.858px;line-height:9.858px;font-size:6.667px;color:#6e7681">13</div>
<div class="a mono" style="left:126px;width:19.8px;text-align:right;top:177.25px;height:9.858px;line-height:9.858px;font-size:6.667px;color:#6e7681">14</div>
<div class="a mono" style="left:159.0px;top:177.25px;height:9.858px;line-height:9.858px;font-size:6.667px"><span style="color:#6a9955">// Middleware:</span></div>
<div class="a mono" style="left:126px;width:19.8px;text-align:right;top:187.11px;height:9.858px;line-height:9.858px;font-size:6.667px;color:#6e7681">15</div>
<div class="a mono" style="left:159.0px;top:187.11px;height:9.858px;line-height:9.858px;font-size:6.667px"><span style="color:#4fc1ff">app</span><span style="color:#cccccc">.</span><span style="color:#dcdcaa">use</span><span style="color:#ffd700">(</span><span style="color:#9cdcfe">express</span><span style="color:#cccccc">.</span><span style="color:#dcdcaa">json</span><span style="color:#da70d6">()</span><span style="color:#ffd700">)</span><span style="color:#cccccc">; </span><span style="color:#6a9955">// Parses incoming requests with JSON payloads.</span></div>
<div class="a mono" style="left:126px;width:19.8px;text-align:right;top:196.97px;height:9.858px;line-height:9.858px;font-size:6.667px;color:#6e7681">16</div>
<div class="a mono" style="left:159.0px;top:196.97px;height:9.858px;line-height:9.858px;font-size:6.667px"><span style="color:#4fc1ff">app</span><span style="color:#cccccc">.</span><span style="color:#dcdcaa">use</span><span style="color:#ffd700">(</span><span style="color:#9cdcfe">express</span><span style="color:#cccccc">.</span><span style="color:#dcdcaa">urlencoded</span><span style="color:#da70d6">(</span><span style="color:#179fff">{</span><span style="color:#cccccc"> </span><span style="color:#9cdcfe">extended</span><span style="color:#9cdcfe">:</span><span style="color:#cccccc"> </span><span style="color:#569cd6">false</span><span style="color:#cccccc"> </span><span style="color:#179fff">}</span><span style="color:#da70d6">)</span><span style="color:#ffd700">)</span><span style="color:#cccccc">; </span><span style="color:#6a9955">// Parses incoming requests with URL-encoded payloads.</span></div>
<div class="a mono" style="left:126px;width:19.8px;text-align:right;top:206.83px;height:9.858px;line-height:9.858px;font-size:6.667px;color:#6e7681">17</div>
<div class="a mono" style="left:159.0px;top:206.83px;height:9.858px;line-height:9.858px;font-size:6.667px"><span style="color:#4fc1ff">app</span><span style="color:#cccccc">.</span><span style="color:#dcdcaa">use</span><span style="color:#ffd700">(</span><span style="color:#dcdcaa">cookieParser</span><span style="color:#da70d6">()</span><span style="color:#ffd700">)</span><span style="color:#cccccc">; </span><span style="color:#6a9955">//  This is necessary for handling cookies.</span></div>
<div class="a mono" style="left:126px;width:19.8px;text-align:right;top:216.69px;height:9.858px;line-height:9.858px;font-size:6.667px;color:#6e7681">18</div>
<div class="a mono" style="left:159.0px;top:216.69px;height:9.858px;line-height:9.858px;font-size:6.667px"><span style="color:#4fc1ff">app</span><span style="color:#cccccc">.</span><span style="color:#dcdcaa">use</span><span style="color:#ffd700">(</span><span style="color:#9cdcfe">arcjetMiddleware</span><span style="color:#ffd700">)</span><span style="color:#cccccc">; </span><span style="color:#6a9955">// This is custom middleware for rate limiting.</span></div>
<div class="a mono" style="left:126px;width:19.8px;text-align:right;top:226.54px;height:9.858px;line-height:9.858px;font-size:6.667px;color:#6e7681">19</div>
<div class="a mono" style="left:126px;width:19.8px;text-align:right;top:236.40px;height:9.858px;line-height:9.858px;font-size:6.667px;color:#6e7681">20</div>
<div class="a mono" style="left:126px;width:19.8px;text-align:right;top:246.26px;height:9.858px;line-height:9.858px;font-size:6.667px;color:#6e7681">21</div>
<div class="a mono" style="left:159.0px;top:246.26px;height:9.858px;line-height:9.858px;font-size:6.667px"><span style="color:#6a9955">// Routes:</span></div>
<div class="a mono" style="left:126px;width:19.8px;text-align:right;top:256.12px;height:9.858px;line-height:9.858px;font-size:6.667px;color:#6e7681">22</div>
<div class="a mono" style="left:159.0px;top:256.12px;height:9.858px;line-height:9.858px;font-size:6.667px"><span style="color:#6a9955">// Mount the authentication routes at the `/api/v1/auth` path.  All routes defined in `authRouter` will be prefixed with this path.</span></div>
<div class="a mono" style="left:126px;width:19.8px;text-align:right;top:265.98px;height:9.858px;line-height:9.858px;font-size:6.667px;color:#6e7681">23</div>
<div class="a mono" style="left:159.0px;top:265.98px;height:9.858px;line-height:9.858px;font-size:6.667px"><span style="color:#4fc1ff">app</span><span style="color:#cccccc">.</span><span style="color:#dcdcaa">use</span><span style="color:#ffd700">(</span><span style="color:#ce9178">&quot;/api/v1/auth&quot;</span><span style="color:#cccccc">, </span><span style="color:#9cdcfe">authRouter</span><span style="color:#ffd700">)</span><span style="color:#cccccc">;</span></div>
<div class="a mono" style="left:126px;width:19.8px;text-align:right;top:275.83px;height:9.858px;line-height:9.858px;font-size:6.667px;color:#6e7681">24</div>
<div class="a mono" style="left:159.0px;top:275.83px;height:9.858px;line-height:9.858px;font-size:6.667px"><span style="color:#4fc1ff">app</span><span style="color:#cccccc">.</span><span style="color:#dcdcaa">use</span><span style="color:#ffd700">(</span><span style="color:#ce9178">&quot;/api/v1/users&quot;</span><span style="color:#cccccc">, </span><span style="color:#9cdcfe">userRouter</span><span style="color:#ffd700">)</span><span style="color:#cccccc">;</span></div>
<div class="a mono" style="left:126px;width:19.8px;text-align:right;top:285.69px;height:9.858px;line-height:9.858px;font-size:6.667px;color:#6e7681">25</div>
<div class="a mono" style="left:159.0px;top:285.69px;height:9.858px;line-height:9.858px;font-size:6.667px"><span style="color:#4fc1ff">app</span><span style="color:#cccccc">.</span><span style="color:#dcdcaa">use</span><span style="color:#ffd700">(</span><span style="color:#ce9178">&quot;/api/v1/subscriptions&quot;</span><span style="color:#cccccc">, </span><span style="color:#9cdcfe">subscriptionRouter</span><span style="color:#ffd700">)</span><span style="color:#cccccc">;</span></div>
<div class="a mono" style="left:126px;width:19.8px;text-align:right;top:295.55px;height:9.858px;line-height:9.858px;font-size:6.667px;color:#6e7681">26</div>
<div class="a mono" style="left:159.0px;top:295.55px;height:9.858px;line-height:9.858px;font-size:6.667px"><span style="color:#4fc1ff">app</span><span style="color:#cccccc">.</span><span style="color:#dcdcaa">use</span><span style="color:#ffd700">(</span><span style="color:#ce9178">&quot;/api/v1/workflows&quot;</span><span style="color:#cccccc">, </span><span style="color:#9cdcfe">workflowRouter</span><span style="color:#ffd700">)</span><span style="color:#cccccc">;</span></div>
<div class="a mono" style="left:126px;width:19.8px;text-align:right;top:305.41px;height:9.858px;line-height:9.858px;font-size:6.667px;color:#6e7681">27</div>
<div class="a mono" style="left:126px;width:19.8px;text-align:right;top:315.27px;height:9.858px;line-height:9.858px;font-size:6.667px;color:#6e7681">28</div>
<div class="a mono" style="left:126px;width:19.8px;text-align:right;top:325.12px;height:9.858px;line-height:9.858px;font-size:6.667px;color:#6e7681">29</div>
<div class="a mono" style="left:159.0px;top:325.12px;height:9.858px;line-height:9.858px;font-size:6.667px"><span style="color:#6a9955">// Error Handling Middleware:</span></div>
<div class="a mono" style="left:126px;width:19.8px;text-align:right;top:334.98px;height:9.858px;line-height:9.858px;font-size:6.667px;color:#6e7681">30</div>
<div class="a mono" style="left:159.0px;top:334.98px;height:9.858px;line-height:9.858px;font-size:6.667px"><span style="color:#6a9955">//  - errorMiddleware:  This custom middleware is responsible for handling errors that occur during the request processing.</span></div>
<div class="a mono" style="left:126px;width:19.8px;text-align:right;top:344.84px;height:9.858px;line-height:9.858px;font-size:6.667px;color:#6e7681">31</div>
<div class="a mono" style="left:159.0px;top:344.84px;height:9.858px;line-height:9.858px;font-size:6.667px"><span style="color:#4fc1ff">app</span><span style="color:#cccccc">.</span><span style="color:#dcdcaa">use</span><span style="color:#ffd700">(</span><span style="color:#9cdcfe">errorMiddleware</span><span style="color:#ffd700">)</span><span style="color:#cccccc">;</span></div>
<div class="a mono" style="left:126px;width:19.8px;text-align:right;top:354.70px;height:9.858px;line-height:9.858px;font-size:6.667px;color:#6e7681">32</div>
<div class="a mono" style="left:126px;width:19.8px;text-align:right;top:364.56px;height:9.858px;line-height:9.858px;font-size:6.667px;color:#6e7681">33</div>
<div class="a mono" style="left:126px;width:19.8px;text-align:right;top:374.41px;height:9.858px;line-height:9.858px;font-size:6.667px;color:#6e7681">34</div>
<div class="a mono" style="left:159.0px;top:374.41px;height:9.858px;line-height:9.858px;font-size:6.667px"><span style="color:#6a9955">// app.get(&quot;/&quot;, (req, res) =&gt; {</span></div>
<div class="a mono" style="left:126px;width:19.8px;text-align:right;top:384.27px;height:9.858px;line-height:9.858px;font-size:6.667px;color:#cccccc">35</div>
<div class="a mono" style="left:159.0px;top:384.27px;height:9.858px;line-height:9.858px;font-size:6.667px"><span style="color:#6a9955">//     res.send(&quot;Hello World&quot;);</span></div>
<div class="a mono" style="left:126px;width:19.8px;text-align:right;top:394.13px;height:9.858px;line-height:9.858px;font-size:6.667px;color:#6e7681">36</div>
<div class="a mono" style="left:159.0px;top:394.13px;height:9.858px;line-height:9.858px;font-size:6.667px"><span style="color:#6a9955">// });</span></div>
<div class="a mono" style="left:126px;width:19.8px;text-align:right;top:403.99px;height:9.858px;line-height:9.858px;font-size:6.667px;color:#6e7681">37</div>
<div class="a" style="left:758px;top:47.3px;width:62.4px;height:38.6px;background:#2a2a2a;"></div>
<div class="a" style="left:820.4px;top:47.5px;width:7.6px;height:167.7px;background:#424242;"></div>
<div class="a" style="left:821px;top:200.2px;width:7px;height:1.5px;background:#9a9a9a;"></div>
<svg style="left:758px;top:47.3px;width:62.4px;height:50px;overflow:hidden" width="62.4" height="50"><rect x="4.70" y="0.80" width="3.12" height="0.62" fill="#c586c0" opacity="0.42"/><rect x="8.34" y="0.80" width="3.64" height="0.62" fill="#9cdcfe" opacity="0.42"/><rect x="12.50" y="0.80" width="2.08" height="0.62" fill="#c586c0" opacity="0.42"/><rect x="15.10" y="0.80" width="4.68" height="0.62" fill="#ce9178" opacity="0.42"/><rect x="19.78" y="0.80" width="0.52" height="0.62" fill="#cccccc" opacity="0.42"/><rect x="4.70" y="1.84" width="3.12" height="0.62" fill="#c586c0" opacity="0.42"/><rect x="8.34" y="1.84" width="7.80" height="0.62" fill="#9cdcfe" opacity="0.42"/><rect x="16.66" y="1.84" width="2.08" height="0.62" fill="#c586c0" opacity="0.42"/><rect x="19.26" y="1.84" width="17.68" height="0.62" fill="#ce9178" opacity="0.42"/><rect x="36.94" y="1.84" width="0.52" height="0.62" fill="#cccccc" opacity="0.42"/><rect x="4.70" y="2.88" width="3.12" height="0.62" fill="#c586c0" opacity="0.42"/><rect x="8.34" y="2.88" width="0.52" height="0.62" fill="#ffd700" opacity="0.42"/><rect x="9.38" y="2.88" width="2.08" height="0.62" fill="#4fc1ff" opacity="0.42"/><rect x="11.98" y="2.88" width="0.52" height="0.62" fill="#ffd700" opacity="0.42"/><rect x="13.02" y="2.88" width="2.08" height="0.62" fill="#c586c0" opacity="0.42"/><rect x="15.62" y="2.88" width="8.84" height="0.62" fill="#ce9178" opacity="0.42"/><rect x="24.46" y="2.88" width="0.52" height="0.62" fill="#cccccc" opacity="0.42"/><rect x="4.70" y="3.92" width="3.12" height="0.62" fill="#c586c0" opacity="0.42"/><rect x="8.34" y="3.92" width="5.20" height="0.62" fill="#9cdcfe" opacity="0.42"/><rect x="14.06" y="3.92" width="2.08" height="0.62" fill="#c586c0" opacity="0.42"/><rect x="16.66" y="3.92" width="13.00" height="0.62" fill="#ce9178" opacity="0.42"/><rect x="29.66" y="3.92" width="0.52" height="0.62" fill="#cccccc" opacity="0.42"/><rect x="4.70" y="4.96" width="3.12" height="0.62" fill="#c586c0" opacity="0.42"/><rect x="8.34" y="4.96" width="5.20" height="0.62" fill="#9cdcfe" opacity="0.42"/><rect x="14.06" y="4.96" width="2.08" height="0.62" fill="#c586c0" opacity="0.42"/><rect x="16.66" y="4.96" width="13.00" height="0.62" fill="#ce9178" opacity="0.42"/><rect x="29.66" y="4.96" width="0.52" height="0.62" fill="#cccccc" opacity="0.42"/><rect x="4.70" y="6.00" width="3.12" height="0.62" fill="#c586c0" opacity="0.42"/><rect x="8.34" y="6.00" width="9.36" height="0.62" fill="#9cdcfe" opacity="0.42"/><rect x="18.22" y="6.00" width="2.08" height="0.62" fill="#c586c0" opacity="0.42"/><rect x="20.82" y="6.00" width="17.68" height="0.62" fill="#ce9178" opacity="0.42"/><rect x="38.50" y="6.00" width="0.52" height="0.62" fill="#cccccc" opacity="0.42"/><rect x="4.70" y="7.04" width="3.12" height="0.62" fill="#c586c0" opacity="0.42"/><rect x="8.34" y="7.04" width="8.84" height="0.62" fill="#9cdcfe" opacity="0.42"/><rect x="17.70" y="7.04" width="2.08" height="0.62" fill="#c586c0" opacity="0.42"/><rect x="20.30" y="7.04" width="11.96" height="0.62" fill="#ce9178" opacity="0.42"/><rect x="32.26" y="7.04" width="0.52" height="0.62" fill="#cccccc" opacity="0.42"/><rect x="4.70" y="8.08" width="3.12" height="0.62" fill="#c586c0" opacity="0.42"/><rect x="8.34" y="8.08" width="6.24" height="0.62" fill="#9cdcfe" opacity="0.42"/><rect x="15.10" y="8.08" width="2.08" height="0.62" fill="#c586c0" opacity="0.42"/><rect x="17.70" y="8.08" width="7.80" height="0.62" fill="#ce9178" opacity="0.42"/><rect x="25.50" y="8.08" width="0.52" height="0.62" fill="#cccccc" opacity="0.42"/><rect x="4.70" y="9.12" width="3.12" height="0.62" fill="#c586c0" opacity="0.42"/><rect x="8.34" y="9.12" width="8.32" height="0.62" fill="#9cdcfe" opacity="0.42"/><rect x="17.18" y="9.12" width="2.08" height="0.62" fill="#c586c0" opacity="0.42"/><rect x="19.78" y="9.12" width="18.20" height="0.62" fill="#ce9178" opacity="0.42"/><rect x="37.98" y="9.12" width="0.52" height="0.62" fill="#cccccc" opacity="0.42"/><rect x="4.70" y="10.16" width="3.12" height="0.62" fill="#c586c0" opacity="0.42"/><rect x="8.34" y="10.16" width="7.28" height="0.62" fill="#9cdcfe" opacity="0.42"/><rect x="16.14" y="10.16" width="2.08" height="0.62" fill="#c586c0" opacity="0.42"/><rect x="18.74" y="10.16" width="15.08" height="0.62" fill="#ce9178" opacity="0.42"/><rect x="33.82" y="10.16" width="0.52" height="0.62" fill="#cccccc" opacity="0.42"/><rect x="4.70" y="12.24" width="2.60" height="0.62" fill="#569cd6" opacity="0.42"/><rect x="7.82" y="12.24" width="1.56" height="0.62" fill="#4fc1ff" opacity="0.42"/><rect x="9.90" y="12.24" width="0.52" height="0.62" fill="#d4d4d4" opacity="0.42"/><rect x="10.94" y="12.24" width="3.64" height="0.62" fill="#dcdcaa" opacity="0.42"/><rect x="14.58" y="12.24" width="1.04" height="0.62" fill="#ffd700" opacity="0.42"/><rect x="15.62" y="12.24" width="0.52" height="0.62" fill="#cccccc" opacity="0.42"/><rect x="4.70" y="14.32" width="1.04" height="0.62" fill="#6a9955" opacity="0.42"/><rect x="6.26" y="14.32" width="5.72" height="0.62" fill="#6a9955" opacity="0.42"/><rect x="4.70" y="15.36" width="1.56" height="0.62" fill="#4fc1ff" opacity="0.42"/><rect x="6.26" y="15.36" width="0.52" height="0.62" fill="#cccccc" opacity="0.42"/><rect x="6.78" y="15.36" width="1.56" height="0.62" fill="#dcdcaa" opacity="0.42"/><rect x="8.34" y="15.36" width="0.52" height="0.62" fill="#ffd700" opacity="0.42"/><rect x="8.86" y="15.36" width="3.64" height="0.62" fill="#9cdcfe" opacity="0.42"/><rect x="12.50" y="15.36" width="0.52" height="0.62" fill="#cccccc" opacity="0.42"/><rect x="13.02" y="15.36" width="2.08" height="0.62" fill="#dcdcaa" opacity="0.42"/><rect x="15.10" y="15.36" width="1.04" height="0.62" fill="#da70d6" opacity="0.42"/><rect x="16.14" y="15.36" width="0.52" height="0.62" fill="#ffd700" opacity="0.42"/><rect x="16.66" y="15.36" width="0.52" height="0.62" fill="#cccccc" opacity="0.42"/><rect x="17.70" y="15.36" width="1.04" height="0.62" fill="#6a9955" opacity="0.42"/><rect x="19.26" y="15.36" width="3.12" height="0.62" fill="#6a9955" opacity="0.42"/><rect x="22.90" y="15.36" width="4.16" height="0.62" fill="#6a9955" opacity="0.42"/><rect x="27.58" y="15.36" width="4.16" height="0.62" fill="#6a9955" opacity="0.42"/><rect x="32.26" y="15.36" width="2.08" height="0.62" fill="#6a9955" opacity="0.42"/><rect x="34.86" y="15.36" width="2.08" height="0.62" fill="#6a9955" opacity="0.42"/><rect x="37.46" y="15.36" width="4.68" height="0.62" fill="#6a9955" opacity="0.42"/><rect x="4.70" y="16.40" width="1.56" height="0.62" fill="#4fc1ff" opacity="0.42"/><rect x="6.26" y="16.40" width="0.52" height="0.62" fill="#cccccc" opacity="0.42"/><rect x="6.78" y="16.40" width="1.56" height="0.62" fill="#dcdcaa" opacity="0.42"/><rect x="8.34" y="16.40" width="0.52" height="0.62" fill="#ffd700" opacity="0.42"/><rect x="8.86" y="16.40" width="3.64" height="0.62" fill="#9cdcfe" opacity="0.42"/><rect x="12.50" y="16.40" width="0.52" height="0.62" fill="#cccccc" opacity="0.42"/><rect x="13.02" y="16.40" width="5.20" height="0.62" fill="#dcdcaa" opacity="0.42"/><rect x="18.22" y="16.40" width="0.52" height="0.62" fill="#da70d6" opacity="0.42"/><rect x="18.74" y="16.40" width="0.52" height="0.62" fill="#179fff" opacity="0.42"/><rect x="19.78" y="16.40" width="4.16" height="0.62" fill="#9cdcfe" opacity="0.42"/><rect x="23.94" y="16.40" width="0.52" height="0.62" fill="#9cdcfe" opacity="0.42"/><rect x="24.98" y="16.40" width="2.60" height="0.62" fill="#569cd6" opacity="0.42"/><rect x="28.10" y="16.40" width="0.52" height="0.62" fill="#179fff" opacity="0.42"/><rect x="28.62" y="16.40" width="0.52" height="0.62" fill="#da70d6" opacity="0.42"/><rect x="29.14" y="16.40" width="0.52" height="0.62" fill="#ffd700" opacity="0.42"/><rect x="29.66" y="16.40" width="0.52" height="0.62" fill="#cccccc" opacity="0.42"/><rect x="30.70" y="16.40" width="1.04" height="0.62" fill="#6a9955" opacity="0.42"/><rect x="32.26" y="16.40" width="3.12" height="0.62" fill="#6a9955" opacity="0.42"/><rect x="35.90" y="16.40" width="4.16" height="0.62" fill="#6a9955" opacity="0.42"/><rect x="40.58" y="16.40" width="4.16" height="0.62" fill="#6a9955" opacity="0.42"/><rect x="45.26" y="16.40" width="2.08" height="0.62" fill="#6a9955" opacity="0.42"/><rect x="47.86" y="16.40" width="5.72" height="0.62" fill="#6a9955" opacity="0.42"/><rect x="54.10" y="16.40" width="4.68" height="0.62" fill="#6a9955" opacity="0.42"/><rect x="4.70" y="17.44" width="1.56" height="0.62" fill="#4fc1ff" opacity="0.42"/><rect x="6.26" y="17.44" width="0.52" height="0.62" fill="#cccccc" opacity="0.42"/><rect x="6.78" y="17.44" width="1.56" height="0.62" fill="#dcdcaa" opacity="0.42"/><rect x="8.34" y="17.44" width="0.52" height="0.62" fill="#ffd700" opacity="0.42"/><rect x="8.86" y="17.44" width="6.24" height="0.62" fill="#dcdcaa" opacity="0.42"/><rect x="15.10" y="17.44" width="1.04" height="0.62" fill="#da70d6" opacity="0.42"/><rect x="16.14" y="17.44" width="0.52" height="0.62" fill="#ffd700" opacity="0.42"/><rect x="16.66" y="17.44" width="0.52" height="0.62" fill="#cccccc" opacity="0.42"/><rect x="17.70" y="17.44" width="1.04" height="0.62" fill="#6a9955" opacity="0.42"/><rect x="19.78" y="17.44" width="2.08" height="0.62" fill="#6a9955" opacity="0.42"/><rect x="22.38" y="17.44" width="1.04" height="0.62" fill="#6a9955" opacity="0.42"/><rect x="23.94" y="17.44" width="4.68" height="0.62" fill="#6a9955" opacity="0.42"/><rect x="29.14" y="17.44" width="1.56" height="0.62" fill="#6a9955" opacity="0.42"/><rect x="31.22" y="17.44" width="4.16" height="0.62" fill="#6a9955" opacity="0.42"/><rect x="35.90" y="17.44" width="4.16" height="0.62" fill="#6a9955" opacity="0.42"/><rect x="4.70" y="18.48" width="1.56" height="0.62" fill="#4fc1ff" opacity="0.42"/><rect x="6.26" y="18.48" width="0.52" height="0.62" fill="#cccccc" opacity="0.42"/><rect x="6.78" y="18.48" width="1.56" height="0.62" fill="#dcdcaa" opacity="0.42"/><rect x="8.34" y="18.48" width="0.52" height="0.62" fill="#ffd700" opacity="0.42"/><rect x="8.86" y="18.48" width="8.32" height="0.62" fill="#9cdcfe" opacity="0.42"/><rect x="17.18" y="18.48" width="0.52" height="0.62" fill="#ffd700" opacity="0.42"/><rect x="17.70" y="18.48" width="0.52" height="0.62" fill="#cccccc" opacity="0.42"/><rect x="18.74" y="18.48" width="1.04" height="0.62" fill="#6a9955" opacity="0.42"/><rect x="20.30" y="18.48" width="2.08" height="0.62" fill="#6a9955" opacity="0.42"/><rect x="22.90" y="18.48" width="1.04" height="0.62" fill="#6a9955" opacity="0.42"/><rect x="24.46" y="18.48" width="3.12" height="0.62" fill="#6a9955" opacity="0.42"/><rect x="28.10" y="18.48" width="5.20" height="0.62" fill="#6a9955" opacity="0.42"/><rect x="33.82" y="18.48" width="1.56" height="0.62" fill="#6a9955" opacity="0.42"/><rect x="35.90" y="18.48" width="2.08" height="0.62" fill="#6a9955" opacity="0.42"/><rect x="38.50" y="18.48" width="4.68" height="0.62" fill="#6a9955" opacity="0.42"/><rect x="4.70" y="21.60" width="1.04" height="0.62" fill="#6a9955" opacity="0.42"/><rect x="6.26" y="21.60" width="3.64" height="0.62" fill="#6a9955" opacity="0.42"/><rect x="4.70" y="22.64" width="1.04" height="0.62" fill="#6a9955" opacity="0.42"/><rect x="6.26" y="22.64" width="2.60" height="0.62" fill="#6a9955" opacity="0.42"/><rect x="9.38" y="22.64" width="1.56" height="0.62" fill="#6a9955" opacity="0.42"/><rect x="11.46" y="22.64" width="7.28" height="0.62" fill="#6a9955" opacity="0.42"/><rect x="19.26" y="22.64" width="3.12" height="0.62" fill="#6a9955" opacity="0.42"/><rect x="22.90" y="22.64" width="1.04" height="0.62" fill="#6a9955" opacity="0.42"/><rect x="24.46" y="22.64" width="1.56" height="0.62" fill="#6a9955" opacity="0.42"/><rect x="26.54" y="22.64" width="7.28" height="0.62" fill="#6a9955" opacity="0.42"/><rect x="34.34" y="22.64" width="2.60" height="0.62" fill="#6a9955" opacity="0.42"/><rect x="37.98" y="22.64" width="1.56" height="0.62" fill="#6a9955" opacity="0.42"/><rect x="40.06" y="22.64" width="3.12" height="0.62" fill="#6a9955" opacity="0.42"/><rect x="43.70" y="22.64" width="3.64" height="0.62" fill="#6a9955" opacity="0.42"/><rect x="47.86" y="22.64" width="1.04" height="0.62" fill="#6a9955" opacity="0.42"/><rect x="49.42" y="22.64" width="6.24" height="0.62" fill="#6a9955" opacity="0.42"/><rect x="56.18" y="22.64" width="2.08" height="0.62" fill="#6a9955" opacity="0.42"/><rect x="58.78" y="22.64" width="1.04" height="0.62" fill="#6a9955" opacity="0.42"/><rect x="60.34" y="22.64" width="4.16" height="0.62" fill="#6a9955" opacity="0.42"/><rect x="65.02" y="22.64" width="2.08" height="0.62" fill="#6a9955" opacity="0.42"/><rect x="67.62" y="22.64" width="2.08" height="0.62" fill="#6a9955" opacity="0.42"/><rect x="70.22" y="22.64" width="2.60" height="0.62" fill="#6a9955" opacity="0.42"/><rect x="4.70" y="23.68" width="1.56" height="0.62" fill="#4fc1ff" opacity="0.42"/><rect x="6.26" y="23.68" width="0.52" height="0.62" fill="#cccccc" opacity="0.42"/><rect x="6.78" y="23.68" width="1.56" height="0.62" fill="#dcdcaa" opacity="0.42"/><rect x="8.34" y="23.68" width="0.52" height="0.62" fill="#ffd700" opacity="0.42"/><rect x="8.86" y="23.68" width="7.28" height="0.62" fill="#ce9178" opacity="0.42"/><rect x="16.14" y="23.68" width="0.52" height="0.62" fill="#cccccc" opacity="0.42"/><rect x="17.18" y="23.68" width="5.20" height="0.62" fill="#9cdcfe" opacity="0.42"/><rect x="22.38" y="23.68" width="0.52" height="0.62" fill="#ffd700" opacity="0.42"/><rect x="22.90" y="23.68" width="0.52" height="0.62" fill="#cccccc" opacity="0.42"/><rect x="4.70" y="24.72" width="1.56" height="0.62" fill="#4fc1ff" opacity="0.42"/><rect x="6.26" y="24.72" width="0.52" height="0.62" fill="#cccccc" opacity="0.42"/><rect x="6.78" y="24.72" width="1.56" height="0.62" fill="#dcdcaa" opacity="0.42"/><rect x="8.34" y="24.72" width="0.52" height="0.62" fill="#ffd700" opacity="0.42"/><rect x="8.86" y="24.72" width="7.80" height="0.62" fill="#ce9178" opacity="0.42"/><rect x="16.66" y="24.72" width="0.52" height="0.62" fill="#cccccc" opacity="0.42"/><rect x="17.70" y="24.72" width="5.20" height="0.62" fill="#9cdcfe" opacity="0.42"/><rect x="22.90" y="24.72" width="0.52" height="0.62" fill="#ffd700" opacity="0.42"/><rect x="23.42" y="24.72" width="0.52" height="0.62" fill="#cccccc" opacity="0.42"/><rect x="4.70" y="25.76" width="1.56" height="0.62" fill="#4fc1ff" opacity="0.42"/><rect x="6.26" y="25.76" width="0.52" height="0.62" fill="#cccccc" opacity="0.42"/><rect x="6.78" y="25.76" width="1.56" height="0.62" fill="#dcdcaa" opacity="0.42"/><rect x="8.34" y="25.76" width="0.52" height="0.62" fill="#ffd700" opacity="0.42"/><rect x="8.86" y="25.76" width="11.96" height="0.62" fill="#ce9178" opacity="0.42"/><rect x="20.82" y="25.76" width="0.52" height="0.62" fill="#cccccc" opacity="0.42"/><rect x="21.86" y="25.76" width="9.36" height="0.62" fill="#9cdcfe" opacity="0.42"/><rect x="31.22" y="25.76" width="0.52" height="0.62" fill="#ffd700" opacity="0.42"/><rect x="31.74" y="25.76" width="0.52" height="0.62" fill="#cccccc" opacity="0.42"/><rect x="4.70" y="26.80" width="1.56" height="0.62" fill="#4fc1ff" opacity="0.42"/><rect x="6.26" y="26.80" width="0.52" height="0.62" fill="#cccccc" opacity="0.42"/><rect x="6.78" y="26.80" width="1.56" height="0.62" fill="#dcdcaa" opacity="0.42"/><rect x="8.34" y="26.80" width="0.52" height="0.62" fill="#ffd700" opacity="0.42"/><rect x="8.86" y="26.80" width="9.88" height="0.62" fill="#ce9178" opacity="0.42"/><rect x="18.74" y="26.80" width="0.52" height="0.62" fill="#cccccc" opacity="0.42"/><rect x="19.78" y="26.80" width="7.28" height="0.62" fill="#9cdcfe" opacity="0.42"/><rect x="27.06" y="26.80" width="0.52" height="0.62" fill="#ffd700" opacity="0.42"/><rect x="27.58" y="26.80" width="0.52" height="0.62" fill="#cccccc" opacity="0.42"/><rect x="4.70" y="29.92" width="1.04" height="0.62" fill="#6a9955" opacity="0.42"/><rect x="6.26" y="29.92" width="2.60" height="0.62" fill="#6a9955" opacity="0.42"/><rect x="9.38" y="29.92" width="4.16" height="0.62" fill="#6a9955" opacity="0.42"/><rect x="14.06" y="29.92" width="5.72" height="0.62" fill="#6a9955" opacity="0.42"/><rect x="4.70" y="30.96" width="1.04" height="0.62" fill="#6a9955" opacity="0.42"/><rect x="6.78" y="30.96" width="0.52" height="0.62" fill="#6a9955" opacity="0.42"/><rect x="7.82" y="30.96" width="8.32" height="0.62" fill="#6a9955" opacity="0.42"/><rect x="17.18" y="30.96" width="2.08" height="0.62" fill="#6a9955" opacity="0.42"/><rect x="19.78" y="30.96" width="3.12" height="0.62" fill="#6a9955" opacity="0.42"/><rect x="23.42" y="30.96" width="5.20" height="0.62" fill="#6a9955" opacity="0.42"/><rect x="29.14" y="30.96" width="1.04" height="0.62" fill="#6a9955" opacity="0.42"/><rect x="30.70" y="30.96" width="5.72" height="0.62" fill="#6a9955" opacity="0.42"/><rect x="36.94" y="30.96" width="1.56" height="0.62" fill="#6a9955" opacity="0.42"/><rect x="39.02" y="30.96" width="4.16" height="0.62" fill="#6a9955" opacity="0.42"/><rect x="43.70" y="30.96" width="3.12" height="0.62" fill="#6a9955" opacity="0.42"/><rect x="47.34" y="30.96" width="2.08" height="0.62" fill="#6a9955" opacity="0.42"/><rect x="49.94" y="30.96" width="2.60" height="0.62" fill="#6a9955" opacity="0.42"/><rect x="53.06" y="30.96" width="3.12" height="0.62" fill="#6a9955" opacity="0.42"/><rect x="56.70" y="30.96" width="1.56" height="0.62" fill="#6a9955" opacity="0.42"/><rect x="58.78" y="30.96" width="3.64" height="0.62" fill="#6a9955" opacity="0.42"/><rect x="62.94" y="30.96" width="5.72" height="0.62" fill="#6a9955" opacity="0.42"/><rect x="4.70" y="32.00" width="1.56" height="0.62" fill="#4fc1ff" opacity="0.42"/><rect x="6.26" y="32.00" width="0.52" height="0.62" fill="#cccccc" opacity="0.42"/><rect x="6.78" y="32.00" width="1.56" height="0.62" fill="#dcdcaa" opacity="0.42"/><rect x="8.34" y="32.00" width="0.52" height="0.62" fill="#ffd700" opacity="0.42"/><rect x="8.86" y="32.00" width="7.80" height="0.62" fill="#9cdcfe" opacity="0.42"/><rect x="16.66" y="32.00" width="0.52" height="0.62" fill="#ffd700" opacity="0.42"/><rect x="17.18" y="32.00" width="0.52" height="0.62" fill="#cccccc" opacity="0.42"/><rect x="4.70" y="35.12" width="1.04" height="0.62" fill="#6a9955" opacity="0.42"/><rect x="6.26" y="35.12" width="6.24" height="0.62" fill="#6a9955" opacity="0.42"/><rect x="13.02" y="35.12" width="2.60" height="0.62" fill="#6a9955" opacity="0.42"/><rect x="16.14" y="35.12" width="2.08" height="0.62" fill="#6a9955" opacity="0.42"/><rect x="18.74" y="35.12" width="1.04" height="0.62" fill="#6a9955" opacity="0.42"/><rect x="20.30" y="35.12" width="0.52" height="0.62" fill="#6a9955" opacity="0.42"/><rect x="4.70" y="36.16" width="1.04" height="0.62" fill="#6a9955" opacity="0.42"/><rect x="8.34" y="36.16" width="7.80" height="0.62" fill="#6a9955" opacity="0.42"/><rect x="16.66" y="36.16" width="4.16" height="0.62" fill="#6a9955" opacity="0.42"/><rect x="4.70" y="37.20" width="1.04" height="0.62" fill="#6a9955" opacity="0.42"/><rect x="6.26" y="37.20" width="1.56" height="0.62" fill="#6a9955" opacity="0.42"/><rect x="4.70" y="39.28" width="1.56" height="0.62" fill="#4fc1ff" opacity="0.42"/><rect x="6.26" y="39.28" width="0.52" height="0.62" fill="#cccccc" opacity="0.42"/><rect x="6.78" y="39.28" width="3.12" height="0.62" fill="#dcdcaa" opacity="0.42"/><rect x="9.90" y="39.28" width="0.52" height="0.62" fill="#ffd700" opacity="0.42"/><rect x="10.42" y="39.28" width="2.08" height="0.62" fill="#4fc1ff" opacity="0.42"/><rect x="12.50" y="39.28" width="0.52" height="0.62" fill="#cccccc" opacity="0.42"/><rect x="13.54" y="39.28" width="2.60" height="0.62" fill="#569cd6" opacity="0.42"/><rect x="16.66" y="39.28" width="1.04" height="0.62" fill="#da70d6" opacity="0.42"/><rect x="18.22" y="39.28" width="1.04" height="0.62" fill="#569cd6" opacity="0.42"/><rect x="19.78" y="39.28" width="0.52" height="0.62" fill="#da70d6" opacity="0.42"/><rect x="5.74" y="40.32" width="3.64" height="0.62" fill="#9cdcfe" opacity="0.42"/><rect x="9.38" y="40.32" width="0.52" height="0.62" fill="#cccccc" opacity="0.42"/><rect x="9.90" y="40.32" width="1.56" height="0.62" fill="#dcdcaa" opacity="0.42"/><rect x="11.46" y="40.32" width="0.52" height="0.62" fill="#da70d6" opacity="0.42"/><rect x="11.98" y="40.32" width="6.76" height="0.62" fill="#ce9178" opacity="0.42"/><rect x="19.26" y="40.32" width="3.64" height="0.62" fill="#ce9178" opacity="0.42"/><rect x="23.42" y="40.32" width="1.56" height="0.62" fill="#ce9178" opacity="0.42"/><rect x="25.50" y="40.32" width="1.04" height="0.62" fill="#ce9178" opacity="0.42"/><rect x="27.06" y="40.32" width="3.64" height="0.62" fill="#ce9178" opacity="0.42"/><rect x="31.22" y="40.32" width="1.04" height="0.62" fill="#ce9178" opacity="0.42"/><rect x="32.78" y="40.32" width="8.84" height="0.62" fill="#ce9178" opacity="0.42"/><rect x="41.62" y="40.32" width="1.04" height="0.62" fill="#569cd6" opacity="0.42"/><rect x="42.66" y="40.32" width="2.08" height="0.62" fill="#4fc1ff" opacity="0.42"/><rect x="44.74" y="40.32" width="0.52" height="0.62" fill="#569cd6" opacity="0.42"/><rect x="45.26" y="40.32" width="0.52" height="0.62" fill="#ce9178" opacity="0.42"/><rect x="45.78" y="40.32" width="0.52" height="0.62" fill="#da70d6" opacity="0.42"/><rect x="46.30" y="40.32" width="0.52" height="0.62" fill="#cccccc" opacity="0.42"/><rect x="5.74" y="42.40" width="2.60" height="0.62" fill="#c586c0" opacity="0.42"/><rect x="8.86" y="42.40" width="8.84" height="0.62" fill="#dcdcaa" opacity="0.42"/><rect x="17.70" y="42.40" width="1.04" height="0.62" fill="#179fff" opacity="0.42"/><rect x="18.74" y="42.40" width="0.52" height="0.62" fill="#cccccc" opacity="0.42"/><rect x="4.70" y="43.44" width="0.52" height="0.62" fill="#da70d6" opacity="0.42"/><rect x="5.22" y="43.44" width="0.52" height="0.62" fill="#ffd700" opacity="0.42"/><rect x="5.74" y="43.44" width="0.52" height="0.62" fill="#cccccc" opacity="0.42"/><rect x="4.70" y="45.52" width="3.12" height="0.62" fill="#c586c0" opacity="0.42"/><rect x="8.34" y="45.52" width="3.64" height="0.62" fill="#c586c0" opacity="0.42"/><rect x="12.50" y="45.52" width="1.56" height="0.62" fill="#4fc1ff" opacity="0.42"/><rect x="14.06" y="45.52" width="0.52" height="0.62" fill="#cccccc" opacity="0.42"/></svg>
<div class="t" style="left:133.6px;top:419.50px;font-size:5.6px;color:#9d9d9d;line-height:10px;height:10px;;transform:scaleX(0.9129);transform-origin:0.000px 50%">PROBLEMS</div>
<div class="t" style="left:174.0px;top:419.50px;font-size:5.6px;color:#9d9d9d;line-height:10px;height:10px;;transform:scaleX(0.9341);transform-origin:0.000px 50%">OUTPUT</div>
<div class="t" style="left:208.0px;top:419.50px;font-size:5.6px;color:#9d9d9d;line-height:10px;height:10px;;transform:scaleX(0.9108);transform-origin:0.000px 50%">DEBUG CONSOLE</div>
<div class="t" style="left:264.6px;top:419.50px;font-size:5.6px;color:#e7e7e7;line-height:10px;height:10px;;transform:scaleX(0.9750);transform-origin:0.000px 50%">TERMINAL</div>
<div class="t" style="left:304.3px;top:419.50px;font-size:5.6px;color:#9d9d9d;line-height:10px;height:10px;;transform:scaleX(0.8707);transform-origin:0.000px 50%">PORTS</div>
<div class="a" style="left:264.6px;top:429.3px;width:28px;height:0.9px;background:#0078d4;"></div>
<svg style="left:126.6px;top:439.4px;" width="5" height="5" viewBox="0 0 5 5"><circle cx="2.2" cy="2.3" r="1.6" stroke="#7a7a7a" stroke-width="0.6" fill="none"/></svg>
<div class="a mono" style="left:133.7px;top:436.9px;line-height:10px;font-size:7.0px;color:#cccccc;transform:scaleX(0.874);transform-origin:0 0">PS C:\Users\USER\Desktop\subscription_tracker&gt;</div>
<svg style="left:699.3px;top:420.5px;" width="9" height="8" viewBox="0 0 9 8"><rect x="0.4" y="0.4" width="7.6" height="7" rx="1" stroke="#cccccc" stroke-width="0.7" fill="none"/><path d="M2 2.2 L4 3.7 L2 5.2 M4.3 5.6 H6.3" stroke="#cccccc" stroke-width="0.6" fill="none"/></svg>
<div class="t" style="left:709.7px;top:419.40px;font-size:6.0px;color:#cccccc;line-height:10px;height:10px;;letter-spacing:-0.153px">powershell</div>
<svg style="left:741.3px;top:420.3px;" width="15" height="8" viewBox="0 0 15 8"><path d="M4 0.4 V7.6 M0.4 4 H7.6" stroke="#cccccc" stroke-width="0.75"/><path d="M10 3 L11.8 4.8 L13.6 3" stroke="#cccccc" stroke-width="0.65" fill="none"/></svg>
<svg style="left:761px;top:420.5px;" width="8" height="8" viewBox="0 0 8 8"><rect x="0.4" y="0.4" width="7.2" height="7.2" rx="1" stroke="#cccccc" stroke-width="0.75" fill="none"/><path d="M4 0.4 V7.6" stroke="#cccccc" stroke-width="0.75"/></svg>
<svg style="left:773.7px;top:420.3px;" width="7" height="8" viewBox="0 0 7 8"><path d="M0.3 1.6 H6.6 M2.3 1.6 V0.5 H4.6 V1.6 M1 1.6 L1.5 7.5 H5.4 L5.9 1.6 M2.6 3 V6.3 M4.3 3 V6.3" stroke="#cccccc" stroke-width="0.65" fill="none"/></svg>
<div class="a" style="left:786.2px;top:423.9px;width:1.1px;height:1.1px;background:#cccccc;border-radius:50%"></div>
<div class="a" style="left:789.0px;top:423.9px;width:1.1px;height:1.1px;background:#cccccc;border-radius:50%"></div>
<div class="a" style="left:791.8000000000001px;top:423.9px;width:1.1px;height:1.1px;background:#cccccc;border-radius:50%"></div>
<svg style="left:799.3px;top:421.8px;" width="7" height="5" viewBox="0 0 7 5"><path d="M0.6 3.8 L3 1.3 L5.4 3.8" stroke="#cccccc" stroke-width="0.75" fill="none"/></svg>
<svg style="left:813px;top:421px;" width="6" height="6" viewBox="0 0 6 6"><path d="M0.4 0.4 L5.6 5.6 M5.6 0.4 L0.4 5.6" stroke="#cccccc" stroke-width="0.75"/></svg>
<div class="a" style="left:820.4px;top:415px;width:7.6px;height:39px;background:#181818;"></div>
<div class="a" style="left:820.2px;top:436.8px;width:0.9px;height:17.4px;background:#111111;"></div>
<div class="a" style="left:821.4px;top:437.1px;width:1.7px;height:1.5px;background:#6a6a6a;border-radius:0.5px"></div>
<div class="a" style="left:823.2px;top:437.6px;width:4.8px;height:0.6px;background:#3a3a3a;"></div>
<svg style="left:0;top:452px" width="15" height="14" viewBox="0 452 15 14"><path d="M8.7 457.2 L6.5 459.2 L8.7 461.1 M4.1 459.4 L5.7 460.9 L4.2 463" stroke="#fff" stroke-width="0.85" fill="none" stroke-linecap="round" stroke-linejoin="round"/></svg>
<svg style="left:18px;top:452px" width="10" height="14" viewBox="18 452 10 14"><circle cx="21.2" cy="457.6" r="1.15" stroke="#cccccc" stroke-width="0.75" fill="none"/><circle cx="21.2" cy="462.8" r="1.15" stroke="#cccccc" stroke-width="0.75" fill="none"/><circle cx="24.9" cy="459.3" r="1.15" stroke="#cccccc" stroke-width="0.75" fill="none"/><path d="M21.2 458.75 V461.65 M24.9 460.45 Q24.9 461.6 22.2 462.1" stroke="#cccccc" stroke-width="0.75" fill="none"/></svg>
<div class="t" style="left:27.9px;top:455.70px;font-size:6.3px;color:#cccccc;line-height:10px;height:10px;;letter-spacing:-0.089px">master</div>
<svg style="left:49.8px;top:457.6px;" width="8" height="7" viewBox="0 0 8 7"><path d="M6.2 2.2 A3 3 0 0 0 1 3.2 M1.4 4.8 A3 3 0 0 0 6.6 3.8" stroke="#cccccc" stroke-width="0.8" fill="none"/><path d="M5 2.4 H6.5 V0.8 M2.6 4.6 H1.1 V6.2" stroke="#cccccc" stroke-width="0.75" fill="none"/></svg>
<svg style="left:65.8px;top:457.1px;" width="8" height="8" viewBox="0 0 8 8"><path d="M4.6 1.6 V0.5 H0.6 V6.7 H4.6 V5.6" stroke="#cccccc" stroke-width="0.8" fill="none"/><path d="M1.5 0.5 V6.7" stroke="#cccccc" stroke-width="0.9"/><path d="M2.8 3.6 H6.9 M5.6 2.4 L6.9 3.6 L5.6 4.8" stroke="#cccccc" stroke-width="0.75" fill="none"/></svg>
<div class="t" style="left:74.5px;top:455.70px;font-size:6.3px;color:#cccccc;line-height:10px;height:10px;;letter-spacing:-0.104px">Sign in to Jira</div>
<svg style="left:120.3px;top:457.1px;" width="8" height="8" viewBox="0 0 8 8"><path d="M4.6 1.6 V0.5 H0.6 V6.7 H4.6 V5.6" stroke="#cccccc" stroke-width="0.8" fill="none"/><path d="M1.5 0.5 V6.7" stroke="#cccccc" stroke-width="0.9"/><path d="M2.8 3.6 H6.9 M5.6 2.4 L6.9 3.6 L5.6 4.8" stroke="#cccccc" stroke-width="0.75" fill="none"/></svg>
<div class="t" style="left:128.7px;top:455.70px;font-size:6.3px;color:#cccccc;line-height:10px;height:10px;;letter-spacing:-0.017px">Sign in to Bitbucket</div>
<svg style="left:191px;top:457.3px;" width="7" height="7" viewBox="0 0 7 7"><circle cx="3.4" cy="3.4" r="2.9" stroke="#cccccc" stroke-width="0.65" fill="none"/><path d="M2 2 L4.8 4.8 M4.8 2 L2 4.8" stroke="#cccccc" stroke-width="0.6"/></svg>
<div class="t" style="left:199.4px;top:455.70px;font-size:6.3px;color:#cccccc;line-height:10px;height:10px;;letter-spacing:0.000px">0</div>
<svg style="left:205.4px;top:457.2px;" width="7" height="7" viewBox="0 0 7 7"><path d="M3.3 0.5 L6.4 6.3 H0.2 Z" stroke="#cccccc" stroke-width="0.65" fill="none" stroke-linejoin="round"/><path d="M3.3 2.5 V4.3 M3.3 5 V5.5" stroke="#cccccc" stroke-width="0.6"/></svg>
<div class="t" style="left:214.2px;top:455.70px;font-size:6.3px;color:#cccccc;line-height:10px;height:10px;;letter-spacing:0.000px">0</div>
<svg style="left:225px;top:457.4px;" width="8" height="7" viewBox="0 0 8 7"><path d="M0.6 3.6 A3.1 3.1 0 0 1 6.4 2.6" stroke="#cccccc" stroke-width="0.8" fill="none" stroke-linecap="round"/></svg>
<div class="t" style="left:234.3px;top:455.70px;font-size:6.3px;color:#cccccc;line-height:10px;height:10px;;letter-spacing:-0.058px">Analyzing &#x27;app.js&#x27; and its dependencies</div>
<div class="t" style="left:635.1px;top:455.70px;font-size:6.3px;color:#cccccc;line-height:10px;height:10px;;letter-spacing:-0.174px">Ln 35, Col 12</div>
<div class="t" style="left:678.9px;top:455.70px;font-size:6.3px;color:#cccccc;line-height:10px;height:10px;;letter-spacing:-0.375px">Spaces: 4</div>
<div class="t" style="left:712.7px;top:455.70px;font-size:6.3px;color:#cccccc;line-height:10px;height:10px;;letter-spacing:-0.440px">UTF-8</div>
<div class="t" style="left:737.4px;top:455.70px;font-size:6.3px;color:#cccccc;line-height:10px;height:10px;;letter-spacing:-1.639px">LF</div>
<svg style="left:753px;top:457.4px;" width="7" height="7" viewBox="0 0 7 7"><path d="M0.6 0.6 A3.3 3.3 0 0 1 5.6 4.6" stroke="#cccccc" stroke-width="0.8" fill="none" stroke-linecap="round"/></svg>
<div class="t" style="left:762.2px;top:455.70px;font-size:6.3px;color:#cccccc;line-height:10px;height:10px;;letter-spacing:-0.291px">JavaScript</div>
<svg style="left:797.2px;top:456.7px;" width="9" height="7" viewBox="0 0 9 7"><path d="M0.6 3.2 Q0.6 6.2 4.1 6.2 Q7.6 6.2 7.6 3.2" stroke="#cccccc" stroke-width="0.9" fill="none"/><circle cx="2.4" cy="2.2" r="1.7" stroke="#cccccc" stroke-width="0.85" fill="none"/><circle cx="5.8" cy="2.2" r="1.7" stroke="#cccccc" stroke-width="0.85" fill="none"/><circle cx="3" cy="4.6" r="0.55" fill="#cccccc"/><circle cx="5.2" cy="4.6" r="0.55" fill="#cccccc"/></svg>
<svg style="left:814.4px;top:457.2px;" width="7" height="8" viewBox="0 0 7 8"><path d="M2.9 0.8 Q0.7 0.9 0.7 3.4 V5 L0.2 5.8 H5.8 L5.3 5 V3.6" stroke="#cccccc" stroke-width="0.75" fill="none"/><path d="M2.1 6.4 Q2.9 7.3 3.7 6.4" stroke="#cccccc" stroke-width="0.7" fill="none"/><circle cx="4.8" cy="1.2" r="1.1" fill="#d8d8d8"/></svg></body></html>
